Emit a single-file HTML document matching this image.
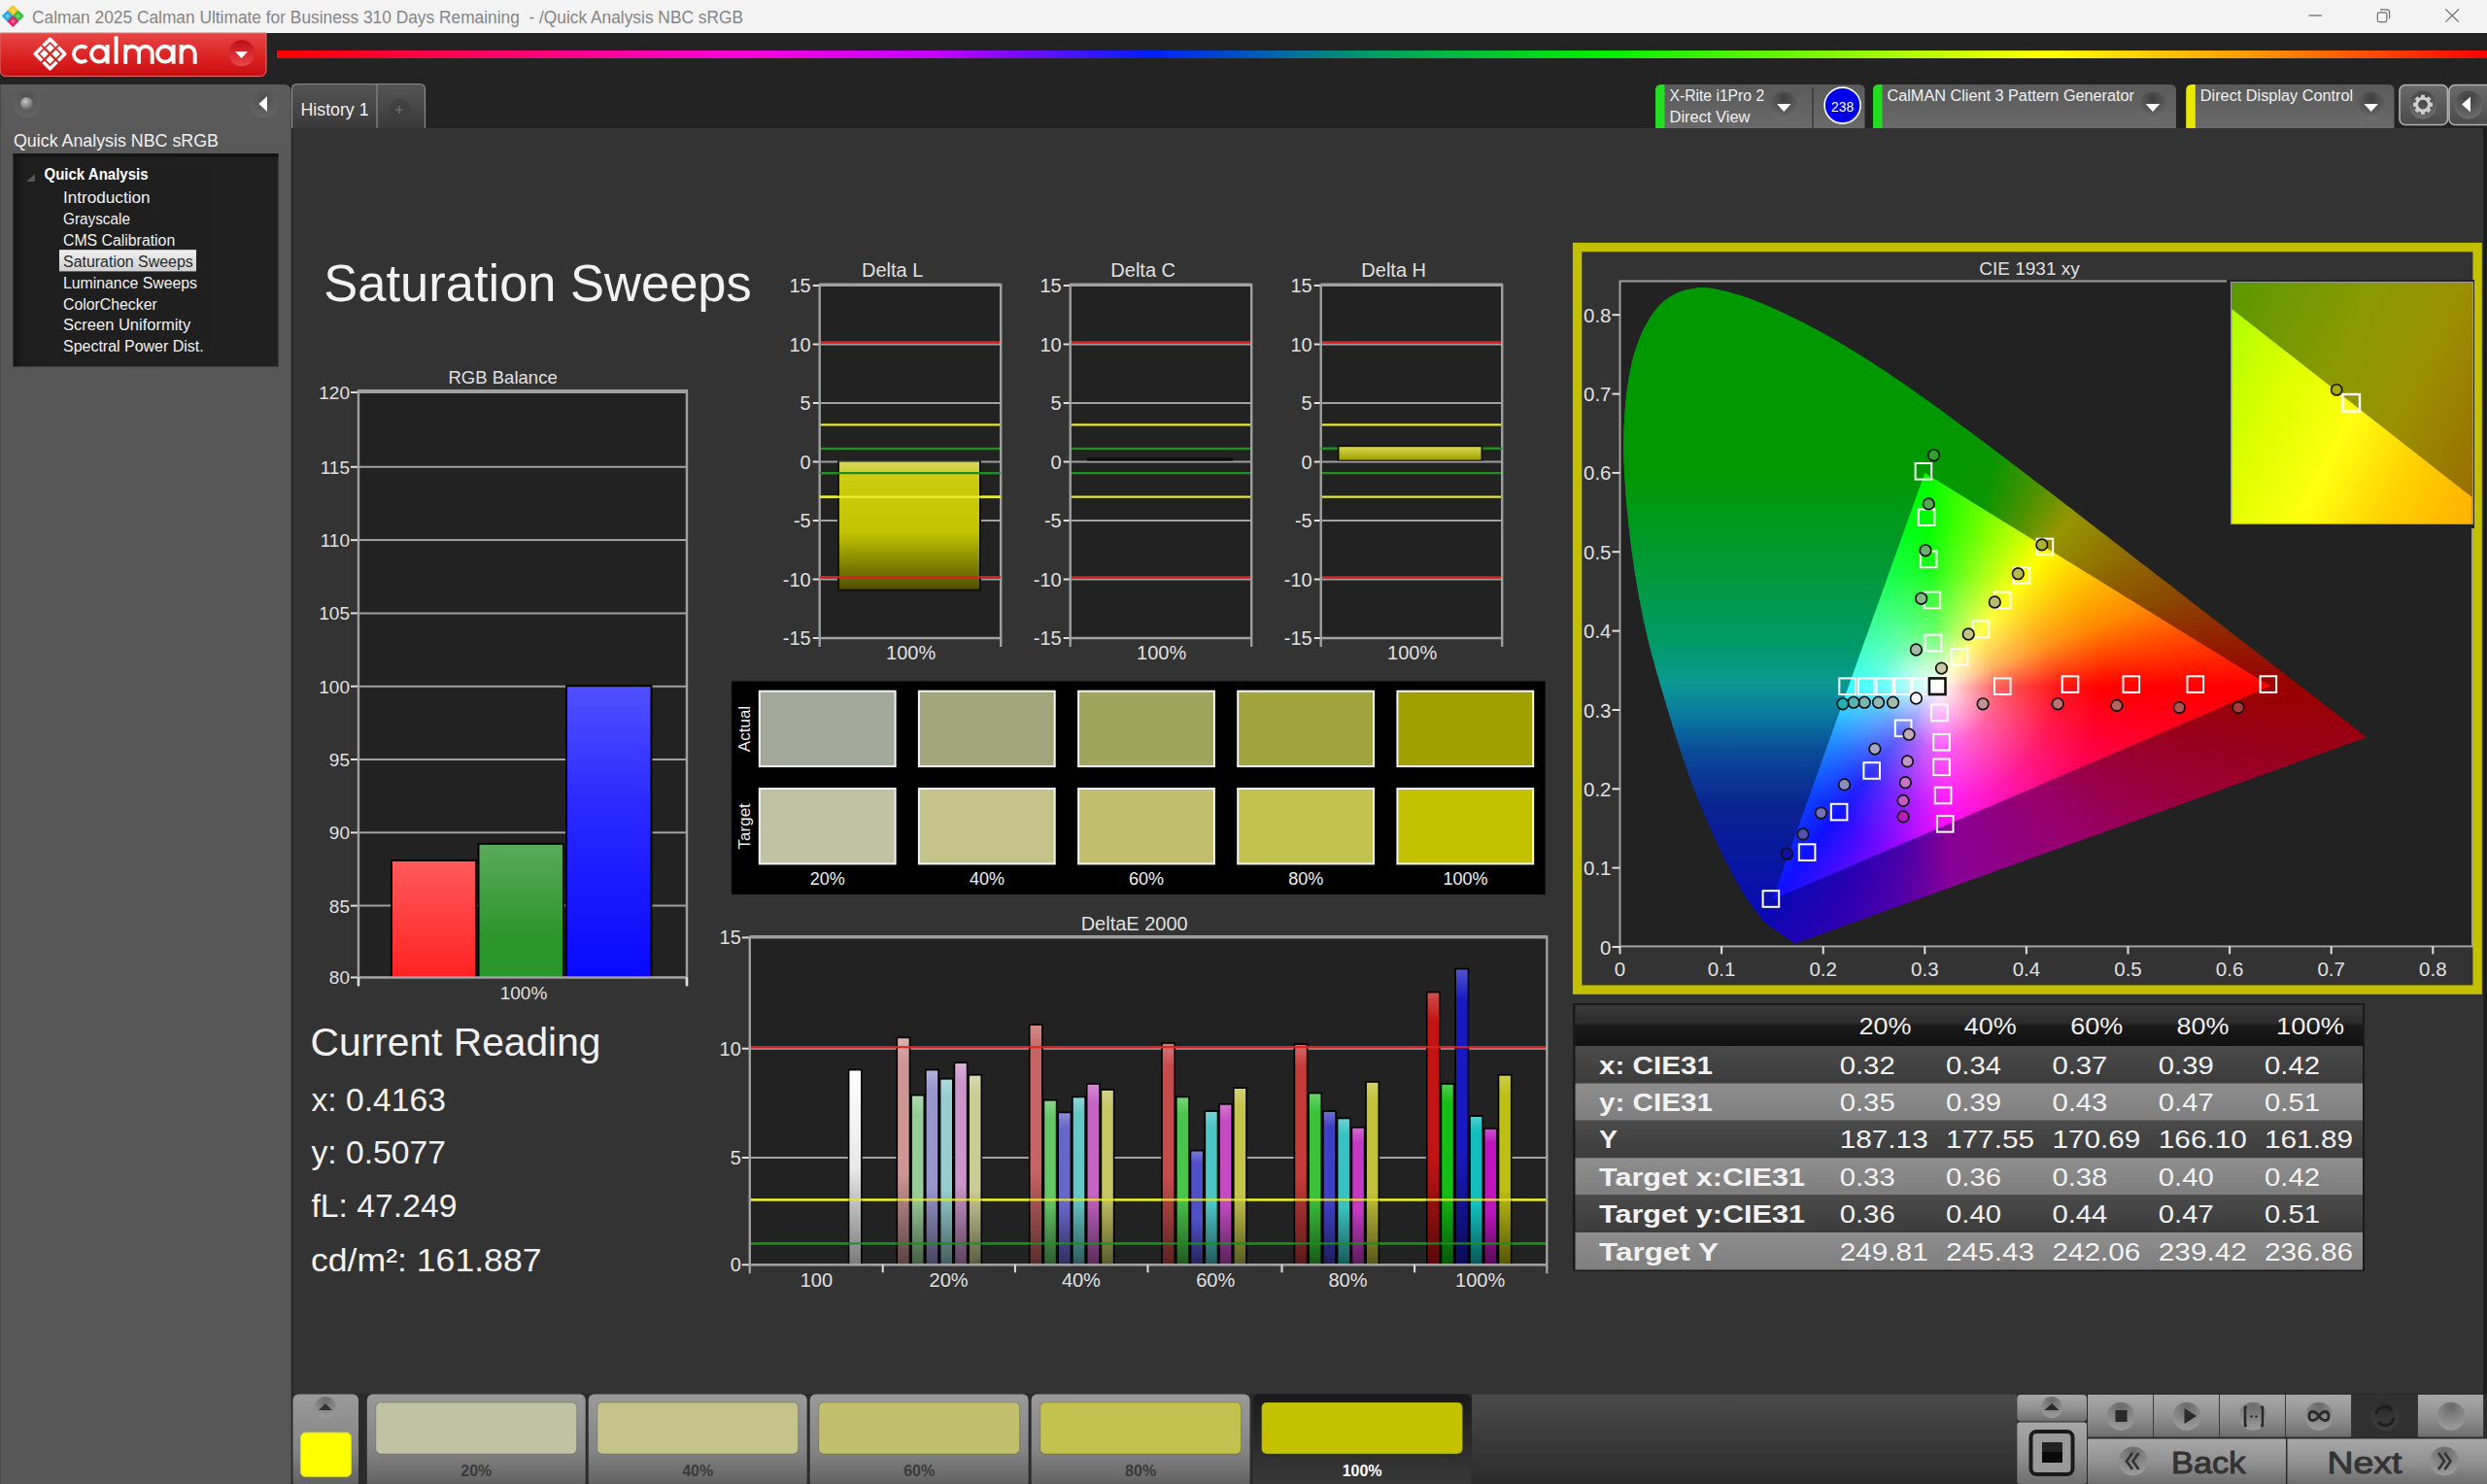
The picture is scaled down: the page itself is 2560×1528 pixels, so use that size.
<!DOCTYPE html>
<html><head><meta charset="utf-8"><style>
html,body{margin:0;padding:0;background:#333;width:2560px;height:1528px;overflow:hidden}
svg{position:absolute;left:0;top:0;font-family:"Liberation Sans", sans-serif}
.abs{position:absolute;left:0;top:0;width:2560px;height:1528px}
</style></head><body>
<svg width="2560" height="1528" viewBox="0 0 2560 1528"><rect x="0" y="0" width="2560" height="34" fill="#f3f3f3"/><path d="M13.3 5.0 L19.3 11.0 L13.3 17.0 L7.300000000000001 11.0 Z" fill="#f5c518"/><path d="M7.8 10.5 L13.8 16.5 L7.8 22.5 L1.7999999999999998 16.5 Z" fill="#29a9e1"/><path d="M18.8 10.5 L24.8 16.5 L18.8 22.5 L12.8 16.5 Z" fill="#33c23b"/><path d="M13.3 16.0 L19.3 22.0 L13.3 28.0 L7.300000000000001 22.0 Z" fill="#e2236b"/><path d="M13.3 8.5 L15.8 11.0 L13.3 13.5 L10.8 11.0 Z" fill="#f3f3f3" opacity="0.35"/><path d="M7.8 14.0 L10.3 16.5 L7.8 19.0 L5.3 16.5 Z" fill="#f3f3f3" opacity="0.35"/><path d="M18.8 14.0 L21.3 16.5 L18.8 19.0 L16.3 16.5 Z" fill="#f3f3f3" opacity="0.35"/><path d="M13.3 19.5 L15.8 22.0 L13.3 24.5 L10.8 22.0 Z" fill="#f3f3f3" opacity="0.35"/><text x="33.0" y="24.0" font-size="17.5" fill="#858585" text-anchor="start" font-weight="normal" textLength="732.0" lengthAdjust="spacingAndGlyphs" >Calman 2025 Calman Ultimate for Business 310 Days Remaining&#160; - /Quick Analysis NBC sRGB</text><line x1="2376.5" y1="16" x2="2390" y2="16" stroke="#6e6e6e" stroke-width="1.3"/><rect x="2447.3" y="12.8" width="9.6" height="9.8" rx="1.8" fill="none" stroke="#6e6e6e" stroke-width="1.2"/><path d="M2450 9.9 H2456.5 Q2459.6 9.9 2459.6 13 V19.3" fill="none" stroke="#6e6e6e" stroke-width="1.2"/><path d="M2517.4 9.5 L2530.9 22.6 M2530.9 9.5 L2517.4 22.6" stroke="#6e6e6e" stroke-width="1.2"/><rect x="0" y="34" width="2560" height="98" fill="#232323"/><defs><linearGradient id="gRed" x1="0" y1="0" x2="0" y2="1"><stop offset="0" stop-color="#e84646"/><stop offset="0.5" stop-color="#dd2626"/><stop offset="1" stop-color="#c90e0e"/></linearGradient><linearGradient id="gRedBtn" x1="0" y1="0" x2="0" y2="1"><stop offset="0" stop-color="#c00c18"/><stop offset="1" stop-color="#e84848"/></linearGradient></defs><path d="M0 34 H274 V72 Q274 78.5 267.5 78.5 H6.5 Q0 78.5 0 72 Z" fill="url(#gRed)" stroke="#e07070" stroke-width="1"/><path d="M51.5 40.2 L66.8 55.5 L51.5 70.8 L36.2 55.5 Z" fill="none" stroke="#fff" stroke-width="3.6" stroke-linejoin="round"/><path d="M51.5 45.6 L55.4 49.5 L51.5 53.4 L47.6 49.5 Z" fill="#fff" stroke="#fff" stroke-width="0.8" stroke-linejoin="round"/><path d="M57.5 51.6 L61.4 55.5 L57.5 59.4 L53.6 55.5 Z" fill="#fff" stroke="#fff" stroke-width="0.8" stroke-linejoin="round"/><path d="M51.5 57.6 L55.4 61.5 L51.5 65.4 L47.6 61.5 Z" fill="#fff" stroke="#fff" stroke-width="0.8" stroke-linejoin="round"/><path d="M45.5 51.6 L49.4 55.5 L45.5 59.4 L41.6 55.5 Z" fill="#fff" stroke="#fff" stroke-width="0.8" stroke-linejoin="round"/><defs><linearGradient id="gRedU" x1="0" y1="34" x2="0" y2="78.5" gradientUnits="userSpaceOnUse"><stop offset="0" stop-color="#e84646"/><stop offset="0.5" stop-color="#dd2626"/><stop offset="1" stop-color="#c90e0e"/></linearGradient></defs><path d="M34.5 38.5 L68.5 72.5 M34.5 72.5 L68.5 38.5" stroke="url(#gRedU)" stroke-width="1.8"/><g fill="none" stroke="#fff" stroke-width="3.9" stroke-linecap="butt"><path d="M89.2 49.6 A8 8 0 1 0 89.2 61.8"/><circle cx="102" cy="55.7" r="7.9"/><path d="M110.6 46 V65.7"/><path d="M119.6 37.3 V65.7"/><path d="M129.2 46 V65.7 M129.2 54.6 A6.875 6.875 0 0 1 142.95 54.6 V65.7 M142.95 54.6 A6.875 6.875 0 0 1 156.7 54.6 V65.7"/><circle cx="169.9" cy="55.7" r="7.9"/><path d="M178.6 46 V65.7"/><path d="M186.6 46 V65.7 M186.6 54.75 A7.05 7.05 0 0 1 200.7 54.75 V65.7"/></g><circle cx="248.8" cy="54.8" r="13.5" fill="url(#gRedBtn)"/><path d="M242 53 L255 53 L248.5 60 Z" fill="#fff"/><defs><linearGradient id="gRain" x1="285" y1="0" x2="2560" y2="0" gradientUnits="userSpaceOnUse"><stop offset="0" stop-color="#ff0000"/><stop offset="0.2" stop-color="#ff00d0"/><stop offset="0.3" stop-color="#c000ff"/><stop offset="0.395" stop-color="#0020ff"/><stop offset="0.5" stop-color="#00a060"/><stop offset="0.6" stop-color="#00ee00"/><stop offset="0.8" stop-color="#ffff00"/><stop offset="0.9" stop-color="#ff9000"/><stop offset="1" stop-color="#ff0000"/></linearGradient></defs><rect x="285" y="52" width="2275" height="8" fill="url(#gRain)"/><defs><linearGradient id="gPanel" x1="0" y1="0" x2="0" y2="1"><stop offset="0" stop-color="#5c5c5c"/><stop offset="0.06" stop-color="#575757"/><stop offset="1" stop-color="#575757"/></linearGradient><radialGradient id="gBtn" cx="0.5" cy="0.3" r="0.7"><stop offset="0" stop-color="#4a4a4a"/><stop offset="1" stop-color="#6a6a6a"/></radialGradient><radialGradient id="gKnob" cx="0.4" cy="0.35" r="0.6"><stop offset="0" stop-color="#c8c8c8"/><stop offset="1" stop-color="#6a6a6a"/></radialGradient></defs><path d="M0 87 H292 Q299.5 87 299.5 94.5 V1528 H0 Z" fill="url(#gPanel)"/><rect x="0" y="87" width="1" height="1441" fill="#4a4a4a"/><circle cx="28" cy="107" r="14" fill="url(#gBtn)" opacity="0.7"/><circle cx="27.5" cy="106.5" r="6.5" fill="url(#gKnob)"/><circle cx="271.5" cy="107" r="14" fill="url(#gBtn)" opacity="0.7"/><path d="M275 99 L266.5 107 L275 115 Z" fill="#fff"/><text x="14.0" y="151.0" font-size="19" fill="#f0f0f0" text-anchor="start" font-weight="normal" textLength="211.0" lengthAdjust="spacingAndGlyphs" >Quick Analysis NBC sRGB</text><defs><linearGradient id="gTree" x1="0" y1="0" x2="1" y2="0"><stop offset="0" stop-color="#141414"/><stop offset="0.04" stop-color="#1e1e1e"/><stop offset="1" stop-color="#202020"/></linearGradient></defs><rect x="13.5" y="158" width="273" height="219.5" fill="url(#gTree)"/><rect x="13.5" y="158" width="273" height="4" fill="#151515"/><path d="M27 187 L36 179 L36 187 Z" fill="#555"/><text x="45.5" y="184.5" font-size="16" fill="#ffffff" text-anchor="start" font-weight="bold" textLength="107.0" lengthAdjust="spacingAndGlyphs" >Quick Analysis</text><defs><linearGradient id="gSel" x1="0" y1="0" x2="0" y2="1"><stop offset="0" stop-color="#f0f0f0"/><stop offset="1" stop-color="#cfcfcf"/></linearGradient></defs><rect x="61" y="257.2" width="141" height="22.2" fill="url(#gSel)"/><text x="65.0" y="209.0" font-size="16" fill="#f2f2f2" text-anchor="start" font-weight="normal" textLength="89.5" lengthAdjust="spacingAndGlyphs" >Introduction</text><text x="65.0" y="230.9" font-size="16" fill="#f2f2f2" text-anchor="start" font-weight="normal" textLength="68.9" lengthAdjust="spacingAndGlyphs" >Grayscale</text><text x="65.0" y="252.8" font-size="16" fill="#f2f2f2" text-anchor="start" font-weight="normal" textLength="115.2" lengthAdjust="spacingAndGlyphs" >CMS Calibration</text><text x="65.0" y="274.7" font-size="16" fill="#2a2a2a" text-anchor="start" font-weight="normal" textLength="133.8" lengthAdjust="spacingAndGlyphs" >Saturation Sweeps</text><text x="65.0" y="296.6" font-size="16" fill="#f2f2f2" text-anchor="start" font-weight="normal" textLength="138.0" lengthAdjust="spacingAndGlyphs" >Luminance Sweeps</text><text x="65.0" y="318.5" font-size="16" fill="#f2f2f2" text-anchor="start" font-weight="normal" textLength="96.7" lengthAdjust="spacingAndGlyphs" >ColorChecker</text><text x="65.0" y="340.4" font-size="16" fill="#f2f2f2" text-anchor="start" font-weight="normal" textLength="131.2" lengthAdjust="spacingAndGlyphs" >Screen Uniformity</text><text x="65.0" y="362.3" font-size="16" fill="#f2f2f2" text-anchor="start" font-weight="normal" textLength="144.7" lengthAdjust="spacingAndGlyphs" >Spectral Power Dist.</text><defs><linearGradient id="gTab" x1="0" y1="0" x2="0" y2="1"><stop offset="0" stop-color="#555"/><stop offset="1" stop-color="#3a3a3a"/></linearGradient></defs><path d="M300.5 132 V92 Q300.5 86.5 306 86.5 H432 Q437.5 86.5 437.5 92 V132" fill="url(#gTab)" stroke="#8a8a8a" stroke-width="1.2"/><line x1="388" y1="87" x2="388" y2="132" stroke="#8a8a8a" stroke-width="1.2"/><text x="309.5" y="118.5" font-size="18" fill="#f0f0f0" text-anchor="start" font-weight="normal" textLength="70.0" lengthAdjust="spacingAndGlyphs" >History 1</text><circle cx="411" cy="113" r="11" fill="#3e3e3e" opacity="0.8"/><path d="M407 113 H415 M411 109 V117" stroke="#777" stroke-width="1.2"/><defs><linearGradient id="gDev" x1="0" y1="0" x2="0" y2="1"><stop offset="0" stop-color="#5a5a5a"/><stop offset="1" stop-color="#6a6a6a"/></linearGradient><radialGradient id="gArr" cx="0.5" cy="0.25" r="0.75"><stop offset="0" stop-color="#3e3e3e"/><stop offset="1" stop-color="#6e6e6e"/></radialGradient></defs><path d="M1704 132 V93 Q1704 87 1710 87 H1913.5 Q1919.5 87 1919.5 93 V132 Z" fill="url(#gDev)"/><path d="M1704 132 V93 Q1704 87 1710 87 H1713.5 V132 Z" fill="#22dd22"/><text x="1718.5" y="103.8" font-size="16" fill="#f0f0f0" text-anchor="start" font-weight="normal" textLength="97.6" lengthAdjust="spacingAndGlyphs" >X-Rite i1Pro 2</text><text x="1718.5" y="125.7" font-size="16" fill="#f0f0f0" text-anchor="start" font-weight="normal" textLength="83.0" lengthAdjust="spacingAndGlyphs" >Direct View</text><circle cx="1836.3" cy="109" r="14.5" fill="url(#gArr)"/><path d="M1829.0 107 H1843.6 L1836.3 115 Z" fill="#fff"/><line x1="1866" y1="90" x2="1866" y2="132" stroke="#3a3a3a" stroke-width="1.5"/><circle cx="1896.6" cy="108.6" r="18.5" fill="#0000e8" stroke="#fff" stroke-width="1.6"/><text x="1896.6" y="114.5" font-size="15" fill="#fff" text-anchor="middle" font-weight="normal" textLength="23.0" lengthAdjust="spacingAndGlyphs" >238</text><path d="M1928 132 V93 Q1928 87 1934 87 H2234 Q2240 87 2240 93 V132 Z" fill="url(#gDev)"/><path d="M1928 132 V93 Q1928 87 1934 87 H1937.5 V132 Z" fill="#22dd22"/><text x="1942.5" y="103.8" font-size="16" fill="#f0f0f0" text-anchor="start" font-weight="normal" textLength="254.5" lengthAdjust="spacingAndGlyphs" >CalMAN Client 3 Pattern Generator</text><circle cx="2216" cy="109" r="14.5" fill="url(#gArr)"/><path d="M2208.7 107 H2223.3 L2216 115 Z" fill="#fff"/><path d="M2250.3 132 V93 Q2250.3 87 2256.3 87 H2458.5 Q2464.5 87 2464.5 93 V132 Z" fill="url(#gDev)"/><path d="M2250.3 132 V93 Q2250.3 87 2256.3 87 H2259.8 V132 Z" fill="#e8e800"/><text x="2264.8" y="103.8" font-size="16" fill="#f0f0f0" text-anchor="start" font-weight="normal" textLength="157.4" lengthAdjust="spacingAndGlyphs" >Direct Display Control</text><circle cx="2440.7" cy="109" r="14.5" fill="url(#gArr)"/><path d="M2433.3999999999996 107 H2448.0 L2440.7 115 Z" fill="#fff"/><defs><linearGradient id="gBtnSq" x1="0" y1="0" x2="0" y2="1"><stop offset="0" stop-color="#6a6a6a"/><stop offset="1" stop-color="#4a4a4a"/></linearGradient></defs><rect x="2470" y="87.5" width="49.5" height="41" rx="6" fill="url(#gBtnSq)" stroke="#b0b0b0" stroke-width="1.6"/><circle cx="2494" cy="108" r="14.5" fill="url(#gArr)"/><rect x="2492.0" y="97.7" width="4" height="5" fill="#cfcfcf" transform="rotate(0 2494 107.7)"/><rect x="2492.0" y="97.7" width="4" height="5" fill="#cfcfcf" transform="rotate(45 2494 107.7)"/><rect x="2492.0" y="97.7" width="4" height="5" fill="#cfcfcf" transform="rotate(90 2494 107.7)"/><rect x="2492.0" y="97.7" width="4" height="5" fill="#cfcfcf" transform="rotate(135 2494 107.7)"/><rect x="2492.0" y="97.7" width="4" height="5" fill="#cfcfcf" transform="rotate(180 2494 107.7)"/><rect x="2492.0" y="97.7" width="4" height="5" fill="#cfcfcf" transform="rotate(225 2494 107.7)"/><rect x="2492.0" y="97.7" width="4" height="5" fill="#cfcfcf" transform="rotate(270 2494 107.7)"/><rect x="2492.0" y="97.7" width="4" height="5" fill="#cfcfcf" transform="rotate(315 2494 107.7)"/><circle cx="2494" cy="107.7" r="6.5" fill="none" stroke="#cfcfcf" stroke-width="3"/><rect x="2521" y="87.5" width="45" height="41" rx="6" fill="url(#gBtnSq)" stroke="#b0b0b0" stroke-width="1.6"/><circle cx="2541" cy="108" r="14.5" fill="url(#gArr)"/><path d="M2543 99.5 L2534 107.5 L2543 115.5 Z" fill="#fff"/><rect x="300" y="132" width="2260" height="1303" fill="#333333"/><rect x="300" y="132" width="2" height="1396" fill="#2a2a2a"/><rect x="2556" y="132" width="4" height="1303" fill="#1c1c1c"/><text x="333.3" y="310.4" font-size="53" fill="#f2f2f2" text-anchor="start" font-weight="normal" textLength="440.5" lengthAdjust="spacingAndGlyphs" >Saturation Sweeps</text><rect x="369" y="404" width="338" height="602.4" fill="#222222"/><text x="517.6" y="395.4" font-size="19" fill="#e0e0e0" text-anchor="middle" font-weight="normal" textLength="112.2" lengthAdjust="spacingAndGlyphs" >RGB Balance</text><line x1="369" y1="1006.4" x2="707" y2="1006.4" stroke="#a0a0a0" stroke-width="2"/><line x1="361" y1="1006.4" x2="369" y2="1006.4" stroke="#e0e0e0" stroke-width="2"/><text x="360.0" y="1013.4" font-size="19" fill="#e0e0e0" text-anchor="end" font-weight="normal" >80</text><line x1="369" y1="932.6" x2="707" y2="932.6" stroke="#a0a0a0" stroke-width="2"/><line x1="361" y1="932.6" x2="369" y2="932.6" stroke="#e0e0e0" stroke-width="2"/><text x="360.0" y="939.6" font-size="19" fill="#e0e0e0" text-anchor="end" font-weight="normal" >85</text><line x1="369" y1="857.3" x2="707" y2="857.3" stroke="#a0a0a0" stroke-width="2"/><line x1="361" y1="857.3" x2="369" y2="857.3" stroke="#e0e0e0" stroke-width="2"/><text x="360.0" y="864.3" font-size="19" fill="#e0e0e0" text-anchor="end" font-weight="normal" >90</text><line x1="369" y1="782.0" x2="707" y2="782.0" stroke="#a0a0a0" stroke-width="2"/><line x1="361" y1="782.0" x2="369" y2="782.0" stroke="#e0e0e0" stroke-width="2"/><text x="360.0" y="789.0" font-size="19" fill="#e0e0e0" text-anchor="end" font-weight="normal" >95</text><line x1="369" y1="706.7" x2="707" y2="706.7" stroke="#a0a0a0" stroke-width="2"/><line x1="361" y1="706.7" x2="369" y2="706.7" stroke="#e0e0e0" stroke-width="2"/><text x="360.0" y="713.7" font-size="19" fill="#e0e0e0" text-anchor="end" font-weight="normal" >100</text><line x1="369" y1="631.4" x2="707" y2="631.4" stroke="#a0a0a0" stroke-width="2"/><line x1="361" y1="631.4" x2="369" y2="631.4" stroke="#e0e0e0" stroke-width="2"/><text x="360.0" y="638.4" font-size="19" fill="#e0e0e0" text-anchor="end" font-weight="normal" >105</text><line x1="369" y1="556.1" x2="707" y2="556.1" stroke="#a0a0a0" stroke-width="2"/><line x1="361" y1="556.1" x2="369" y2="556.1" stroke="#e0e0e0" stroke-width="2"/><text x="360.0" y="563.1" font-size="19" fill="#e0e0e0" text-anchor="end" font-weight="normal" >110</text><line x1="369" y1="480.8" x2="707" y2="480.8" stroke="#a0a0a0" stroke-width="2"/><line x1="361" y1="480.8" x2="369" y2="480.8" stroke="#e0e0e0" stroke-width="2"/><text x="360.0" y="487.8" font-size="19" fill="#e0e0e0" text-anchor="end" font-weight="normal" >115</text><line x1="369" y1="404.0" x2="707" y2="404.0" stroke="#a0a0a0" stroke-width="2"/><line x1="361" y1="404.0" x2="369" y2="404.0" stroke="#e0e0e0" stroke-width="2"/><text x="360.0" y="411.0" font-size="19" fill="#e0e0e0" text-anchor="end" font-weight="normal" >120</text><line x1="369" y1="402.5" x2="707" y2="402.5" stroke="#a0a0a0" stroke-width="3"/><defs><linearGradient id="gR" x1="0" y1="0" x2="0" y2="1"><stop offset="0" stop-color="#ff5a5a"/><stop offset="1" stop-color="#ff2222"/></linearGradient><linearGradient id="gG" x1="0" y1="0" x2="0" y2="1"><stop offset="0" stop-color="#5aaa5a"/><stop offset="0.7" stop-color="#2b962b"/><stop offset="1" stop-color="#2a952a"/></linearGradient><linearGradient id="gB" x1="0" y1="0" x2="0" y2="1"><stop offset="0" stop-color="#5050ff"/><stop offset="0.4" stop-color="#2a2aff"/><stop offset="1" stop-color="#0808ff"/></linearGradient></defs><rect x="402" y="884.9" width="89" height="121.5" fill="#000"/><rect x="404" y="886.9" width="85" height="119.5" fill="url(#gR)"/><rect x="491.5" y="867.8" width="89.5" height="138.6" fill="#000"/><rect x="493.5" y="869.8" width="85.5" height="136.6" fill="url(#gG)"/><rect x="582" y="705.2" width="89.5" height="301.2" fill="#000"/><rect x="584" y="707.2" width="85.5" height="299.2" fill="url(#gB)"/><line x1="369" y1="401" x2="369" y2="1014.4" stroke="#a0a0a0" stroke-width="2.4"/><line x1="707" y1="401" x2="707" y2="1014.4" stroke="#a0a0a0" stroke-width="2.4"/><line x1="369" y1="1006.4" x2="707" y2="1006.4" stroke="#a0a0a0" stroke-width="2.4"/><line x1="369" y1="1006.4" x2="369" y2="1015.4" stroke="#e0e0e0" stroke-width="2.4"/><line x1="707" y1="1006.4" x2="707" y2="1015.4" stroke="#e0e0e0" stroke-width="2.4"/><text x="539.0" y="1029.0" font-size="19" fill="#e0e0e0" text-anchor="middle" font-weight="normal" >100%</text><defs><linearGradient id="gDL" x1="0" y1="0" x2="0" y2="1"><stop offset="0" stop-color="#d8d860"/><stop offset="0.12" stop-color="#cccc10"/><stop offset="0.55" stop-color="#c4c400"/><stop offset="1" stop-color="#505000"/></linearGradient><linearGradient id="gDH" x1="0" y1="0" x2="0" y2="1"><stop offset="0" stop-color="#d8d850"/><stop offset="1" stop-color="#a0a000"/></linearGradient></defs><rect x="843.7" y="294.0" width="186.5" height="363.0" fill="#222222"/><text x="918.7" y="285.4" font-size="20" fill="#e0e0e0" text-anchor="middle" font-weight="normal" >Delta L</text><line x1="843.7" y1="657.0" x2="1030.2" y2="657.0" stroke="#a0a0a0" stroke-width="2"/><line x1="836.7" y1="657.0" x2="843.7" y2="657.0" stroke="#e0e0e0" stroke-width="2"/><text x="834.7" y="664.0" font-size="20" fill="#e0e0e0" text-anchor="end" font-weight="normal" >-15</text><line x1="843.7" y1="596.5" x2="1030.2" y2="596.5" stroke="#a0a0a0" stroke-width="2"/><line x1="836.7" y1="596.5" x2="843.7" y2="596.5" stroke="#e0e0e0" stroke-width="2"/><text x="834.7" y="603.5" font-size="20" fill="#e0e0e0" text-anchor="end" font-weight="normal" >-10</text><line x1="843.7" y1="536.0" x2="1030.2" y2="536.0" stroke="#a0a0a0" stroke-width="2"/><line x1="836.7" y1="536.0" x2="843.7" y2="536.0" stroke="#e0e0e0" stroke-width="2"/><text x="834.7" y="543.0" font-size="20" fill="#e0e0e0" text-anchor="end" font-weight="normal" >-5</text><line x1="843.7" y1="475.5" x2="1030.2" y2="475.5" stroke="#a0a0a0" stroke-width="2"/><line x1="836.7" y1="475.5" x2="843.7" y2="475.5" stroke="#e0e0e0" stroke-width="2"/><text x="834.7" y="482.5" font-size="20" fill="#e0e0e0" text-anchor="end" font-weight="normal" >0</text><line x1="843.7" y1="415.0" x2="1030.2" y2="415.0" stroke="#a0a0a0" stroke-width="2"/><line x1="836.7" y1="415.0" x2="843.7" y2="415.0" stroke="#e0e0e0" stroke-width="2"/><text x="834.7" y="422.0" font-size="20" fill="#e0e0e0" text-anchor="end" font-weight="normal" >5</text><line x1="843.7" y1="354.5" x2="1030.2" y2="354.5" stroke="#a0a0a0" stroke-width="2"/><line x1="836.7" y1="354.5" x2="843.7" y2="354.5" stroke="#e0e0e0" stroke-width="2"/><text x="834.7" y="361.5" font-size="20" fill="#e0e0e0" text-anchor="end" font-weight="normal" >10</text><line x1="843.7" y1="294.0" x2="1030.2" y2="294.0" stroke="#a0a0a0" stroke-width="2"/><line x1="836.7" y1="294.0" x2="843.7" y2="294.0" stroke="#e0e0e0" stroke-width="2"/><text x="834.7" y="301.0" font-size="20" fill="#e0e0e0" text-anchor="end" font-weight="normal" >15</text><line x1="843.7" y1="293.0" x2="1030.2" y2="293.0" stroke="#a0a0a0" stroke-width="3"/><line x1="843.7" y1="352.3" x2="1030.2" y2="352.3" stroke="#e02020" stroke-width="2.2"/><line x1="843.7" y1="594.3" x2="1030.2" y2="594.3" stroke="#e02020" stroke-width="2.2"/><line x1="843.7" y1="437.4" x2="1030.2" y2="437.4" stroke="#e8e830" stroke-width="2.2"/><line x1="843.7" y1="511.6" x2="1030.2" y2="511.6" stroke="#e8e830" stroke-width="2.2"/><line x1="843.7" y1="461.8" x2="1030.2" y2="461.8" stroke="#1f8f1f" stroke-width="2.2"/><line x1="843.7" y1="487.2" x2="1030.2" y2="487.2" stroke="#1f8f1f" stroke-width="2.2"/><line x1="843.7" y1="292.0" x2="843.7" y2="666" stroke="#a0a0a0" stroke-width="2.4"/><line x1="1030.2" y1="292.0" x2="1030.2" y2="666" stroke="#a0a0a0" stroke-width="2.4"/><line x1="843.7" y1="657" x2="1030.2" y2="657" stroke="#a0a0a0" stroke-width="2.4"/><text x="937.7" y="679.4" font-size="20" fill="#e0e0e0" text-anchor="middle" font-weight="normal" >100%</text><rect x="862" y="474.5" width="148" height="134.1" fill="#111"/><rect x="864" y="475.5" width="144" height="131.1" fill="url(#gDL)"/><line x1="843.7" y1="594.3" x2="1030.2" y2="594.3" stroke="#e02020" stroke-width="2.2"/><line x1="843.7" y1="511.6" x2="1030.2" y2="511.6" stroke="#f0f030" stroke-width="2.2"/><line x1="843.7" y1="487.2" x2="1030.2" y2="487.2" stroke="#1f8f1f" stroke-width="2.2"/><rect x="1101.7" y="294.0" width="186.5" height="363.0" fill="#222222"/><text x="1176.7" y="285.4" font-size="20" fill="#e0e0e0" text-anchor="middle" font-weight="normal" >Delta C</text><line x1="1101.7" y1="657.0" x2="1288.2" y2="657.0" stroke="#a0a0a0" stroke-width="2"/><line x1="1094.7" y1="657.0" x2="1101.7" y2="657.0" stroke="#e0e0e0" stroke-width="2"/><text x="1092.7" y="664.0" font-size="20" fill="#e0e0e0" text-anchor="end" font-weight="normal" >-15</text><line x1="1101.7" y1="596.5" x2="1288.2" y2="596.5" stroke="#a0a0a0" stroke-width="2"/><line x1="1094.7" y1="596.5" x2="1101.7" y2="596.5" stroke="#e0e0e0" stroke-width="2"/><text x="1092.7" y="603.5" font-size="20" fill="#e0e0e0" text-anchor="end" font-weight="normal" >-10</text><line x1="1101.7" y1="536.0" x2="1288.2" y2="536.0" stroke="#a0a0a0" stroke-width="2"/><line x1="1094.7" y1="536.0" x2="1101.7" y2="536.0" stroke="#e0e0e0" stroke-width="2"/><text x="1092.7" y="543.0" font-size="20" fill="#e0e0e0" text-anchor="end" font-weight="normal" >-5</text><line x1="1101.7" y1="475.5" x2="1288.2" y2="475.5" stroke="#a0a0a0" stroke-width="2"/><line x1="1094.7" y1="475.5" x2="1101.7" y2="475.5" stroke="#e0e0e0" stroke-width="2"/><text x="1092.7" y="482.5" font-size="20" fill="#e0e0e0" text-anchor="end" font-weight="normal" >0</text><line x1="1101.7" y1="415.0" x2="1288.2" y2="415.0" stroke="#a0a0a0" stroke-width="2"/><line x1="1094.7" y1="415.0" x2="1101.7" y2="415.0" stroke="#e0e0e0" stroke-width="2"/><text x="1092.7" y="422.0" font-size="20" fill="#e0e0e0" text-anchor="end" font-weight="normal" >5</text><line x1="1101.7" y1="354.5" x2="1288.2" y2="354.5" stroke="#a0a0a0" stroke-width="2"/><line x1="1094.7" y1="354.5" x2="1101.7" y2="354.5" stroke="#e0e0e0" stroke-width="2"/><text x="1092.7" y="361.5" font-size="20" fill="#e0e0e0" text-anchor="end" font-weight="normal" >10</text><line x1="1101.7" y1="294.0" x2="1288.2" y2="294.0" stroke="#a0a0a0" stroke-width="2"/><line x1="1094.7" y1="294.0" x2="1101.7" y2="294.0" stroke="#e0e0e0" stroke-width="2"/><text x="1092.7" y="301.0" font-size="20" fill="#e0e0e0" text-anchor="end" font-weight="normal" >15</text><line x1="1101.7" y1="293.0" x2="1288.2" y2="293.0" stroke="#a0a0a0" stroke-width="3"/><line x1="1101.7" y1="352.3" x2="1288.2" y2="352.3" stroke="#e02020" stroke-width="2.2"/><line x1="1101.7" y1="594.3" x2="1288.2" y2="594.3" stroke="#e02020" stroke-width="2.2"/><line x1="1101.7" y1="437.4" x2="1288.2" y2="437.4" stroke="#e8e830" stroke-width="2.2"/><line x1="1101.7" y1="511.6" x2="1288.2" y2="511.6" stroke="#e8e830" stroke-width="2.2"/><line x1="1101.7" y1="461.8" x2="1288.2" y2="461.8" stroke="#1f8f1f" stroke-width="2.2"/><line x1="1101.7" y1="487.2" x2="1288.2" y2="487.2" stroke="#1f8f1f" stroke-width="2.2"/><line x1="1101.7" y1="292.0" x2="1101.7" y2="666" stroke="#a0a0a0" stroke-width="2.4"/><line x1="1288.2" y1="292.0" x2="1288.2" y2="666" stroke="#a0a0a0" stroke-width="2.4"/><line x1="1101.7" y1="657" x2="1288.2" y2="657" stroke="#a0a0a0" stroke-width="2.4"/><text x="1195.7" y="679.4" font-size="20" fill="#e0e0e0" text-anchor="middle" font-weight="normal" >100%</text><rect x="1119" y="471.5" width="150" height="3" fill="#0a0a0a"/><rect x="1359.7" y="294.0" width="186.5" height="363.0" fill="#222222"/><text x="1434.7" y="285.4" font-size="20" fill="#e0e0e0" text-anchor="middle" font-weight="normal" >Delta H</text><line x1="1359.7" y1="657.0" x2="1546.2" y2="657.0" stroke="#a0a0a0" stroke-width="2"/><line x1="1352.7" y1="657.0" x2="1359.7" y2="657.0" stroke="#e0e0e0" stroke-width="2"/><text x="1350.7" y="664.0" font-size="20" fill="#e0e0e0" text-anchor="end" font-weight="normal" >-15</text><line x1="1359.7" y1="596.5" x2="1546.2" y2="596.5" stroke="#a0a0a0" stroke-width="2"/><line x1="1352.7" y1="596.5" x2="1359.7" y2="596.5" stroke="#e0e0e0" stroke-width="2"/><text x="1350.7" y="603.5" font-size="20" fill="#e0e0e0" text-anchor="end" font-weight="normal" >-10</text><line x1="1359.7" y1="536.0" x2="1546.2" y2="536.0" stroke="#a0a0a0" stroke-width="2"/><line x1="1352.7" y1="536.0" x2="1359.7" y2="536.0" stroke="#e0e0e0" stroke-width="2"/><text x="1350.7" y="543.0" font-size="20" fill="#e0e0e0" text-anchor="end" font-weight="normal" >-5</text><line x1="1359.7" y1="475.5" x2="1546.2" y2="475.5" stroke="#a0a0a0" stroke-width="2"/><line x1="1352.7" y1="475.5" x2="1359.7" y2="475.5" stroke="#e0e0e0" stroke-width="2"/><text x="1350.7" y="482.5" font-size="20" fill="#e0e0e0" text-anchor="end" font-weight="normal" >0</text><line x1="1359.7" y1="415.0" x2="1546.2" y2="415.0" stroke="#a0a0a0" stroke-width="2"/><line x1="1352.7" y1="415.0" x2="1359.7" y2="415.0" stroke="#e0e0e0" stroke-width="2"/><text x="1350.7" y="422.0" font-size="20" fill="#e0e0e0" text-anchor="end" font-weight="normal" >5</text><line x1="1359.7" y1="354.5" x2="1546.2" y2="354.5" stroke="#a0a0a0" stroke-width="2"/><line x1="1352.7" y1="354.5" x2="1359.7" y2="354.5" stroke="#e0e0e0" stroke-width="2"/><text x="1350.7" y="361.5" font-size="20" fill="#e0e0e0" text-anchor="end" font-weight="normal" >10</text><line x1="1359.7" y1="294.0" x2="1546.2" y2="294.0" stroke="#a0a0a0" stroke-width="2"/><line x1="1352.7" y1="294.0" x2="1359.7" y2="294.0" stroke="#e0e0e0" stroke-width="2"/><text x="1350.7" y="301.0" font-size="20" fill="#e0e0e0" text-anchor="end" font-weight="normal" >15</text><line x1="1359.7" y1="293.0" x2="1546.2" y2="293.0" stroke="#a0a0a0" stroke-width="3"/><line x1="1359.7" y1="352.3" x2="1546.2" y2="352.3" stroke="#e02020" stroke-width="2.2"/><line x1="1359.7" y1="594.3" x2="1546.2" y2="594.3" stroke="#e02020" stroke-width="2.2"/><line x1="1359.7" y1="437.4" x2="1546.2" y2="437.4" stroke="#e8e830" stroke-width="2.2"/><line x1="1359.7" y1="511.6" x2="1546.2" y2="511.6" stroke="#e8e830" stroke-width="2.2"/><line x1="1359.7" y1="461.8" x2="1546.2" y2="461.8" stroke="#1f8f1f" stroke-width="2.2"/><line x1="1359.7" y1="487.2" x2="1546.2" y2="487.2" stroke="#1f8f1f" stroke-width="2.2"/><line x1="1359.7" y1="292.0" x2="1359.7" y2="666" stroke="#a0a0a0" stroke-width="2.4"/><line x1="1546.2" y1="292.0" x2="1546.2" y2="666" stroke="#a0a0a0" stroke-width="2.4"/><line x1="1359.7" y1="657" x2="1546.2" y2="657" stroke="#a0a0a0" stroke-width="2.4"/><text x="1453.7" y="679.4" font-size="20" fill="#e0e0e0" text-anchor="middle" font-weight="normal" >100%</text><rect x="1376.5" y="458.2" width="150" height="16.3" fill="#111"/><rect x="1378.5" y="460.2" width="146" height="13.3" fill="url(#gDH)"/><line x1="1359.7" y1="461.8" x2="1376.5" y2="461.8" stroke="#1f8f1f" stroke-width="2.4"/><line x1="1526.5" y1="461.8" x2="1546.2" y2="461.8" stroke="#1f8f1f" stroke-width="2.4"/><rect x="753" y="701.4" width="837.6" height="219.6" fill="#000"/><rect x="781.8" y="711.7" width="139.8" height="77.4" fill="#a3a898" stroke="#f4f4f4" stroke-width="2"/><rect x="781.8" y="812" width="139.8" height="77.4" fill="#c1c2a3" stroke="#f4f4f4" stroke-width="2"/><text x="851.8" y="911.3" font-size="18" fill="#f0f0f0" text-anchor="middle" font-weight="normal" >20%</text><rect x="945.9" y="711.7" width="139.8" height="77.4" fill="#a2a77b" stroke="#f4f4f4" stroke-width="2"/><rect x="945.9" y="812" width="139.8" height="77.4" fill="#c4c38a" stroke="#f4f4f4" stroke-width="2"/><text x="1015.9" y="911.3" font-size="18" fill="#f0f0f0" text-anchor="middle" font-weight="normal" >40%</text><rect x="1110.1" y="711.7" width="139.8" height="77.4" fill="#9fa55d" stroke="#f4f4f4" stroke-width="2"/><rect x="1110.1" y="812" width="139.8" height="77.4" fill="#c1bf6b" stroke="#f4f4f4" stroke-width="2"/><text x="1180.1" y="911.3" font-size="18" fill="#f0f0f0" text-anchor="middle" font-weight="normal" >60%</text><rect x="1274.2" y="711.7" width="139.8" height="77.4" fill="#a0a43e" stroke="#f4f4f4" stroke-width="2"/><rect x="1274.2" y="812" width="139.8" height="77.4" fill="#c2c24e" stroke="#f4f4f4" stroke-width="2"/><text x="1344.2" y="911.3" font-size="18" fill="#f0f0f0" text-anchor="middle" font-weight="normal" >80%</text><rect x="1438.4" y="711.7" width="139.8" height="77.4" fill="#a0a000" stroke="#f4f4f4" stroke-width="2"/><rect x="1438.4" y="812" width="139.8" height="77.4" fill="#c4c200" stroke="#f4f4f4" stroke-width="2"/><text x="1508.4" y="911.3" font-size="18" fill="#f0f0f0" text-anchor="middle" font-weight="normal" >100%</text><text transform="translate(771.5 750.5) rotate(-90)" font-size="17" fill="#f0f0f0" text-anchor="middle">Actual</text><text transform="translate(771.5 850.8) rotate(-90)" font-size="17" fill="#f0f0f0" text-anchor="middle">Target</text><rect x="771.8" y="965.4" width="820.5" height="336.9" fill="#222222"/><text x="1167.7" y="958.3" font-size="20" fill="#e0e0e0" text-anchor="middle" font-weight="normal" >DeltaE 2000</text><line x1="771.8" y1="1302.3" x2="1592.3" y2="1302.3" stroke="#a0a0a0" stroke-width="2"/><line x1="763.8" y1="1302.3" x2="771.8" y2="1302.3" stroke="#e0e0e0" stroke-width="2"/><text x="762.8" y="1309.3" font-size="20" fill="#e0e0e0" text-anchor="end" font-weight="normal" >0</text><line x1="771.8" y1="1192.0" x2="1592.3" y2="1192.0" stroke="#a0a0a0" stroke-width="2"/><line x1="763.8" y1="1192.0" x2="771.8" y2="1192.0" stroke="#e0e0e0" stroke-width="2"/><text x="762.8" y="1199.0" font-size="20" fill="#e0e0e0" text-anchor="end" font-weight="normal" >5</text><line x1="771.8" y1="1079.7" x2="1592.3" y2="1079.7" stroke="#a0a0a0" stroke-width="2"/><line x1="763.8" y1="1079.7" x2="771.8" y2="1079.7" stroke="#e0e0e0" stroke-width="2"/><text x="762.8" y="1086.7" font-size="20" fill="#e0e0e0" text-anchor="end" font-weight="normal" >10</text><line x1="771.8" y1="965.4" x2="1592.3" y2="965.4" stroke="#a0a0a0" stroke-width="2"/><line x1="763.8" y1="965.4" x2="771.8" y2="965.4" stroke="#e0e0e0" stroke-width="2"/><text x="762.8" y="972.4" font-size="20" fill="#e0e0e0" text-anchor="end" font-weight="normal" >15</text><line x1="771.8" y1="964.4" x2="1592.3" y2="964.4" stroke="#a0a0a0" stroke-width="3"/><line x1="771.8" y1="1078.2" x2="1592.3" y2="1078.2" stroke="#e02020" stroke-width="2.2"/><line x1="771.8" y1="1235.4" x2="1592.3" y2="1235.4" stroke="#e8e830" stroke-width="2.2"/><line x1="771.8" y1="1280.3" x2="1592.3" y2="1280.3" stroke="#1f8f1f" stroke-width="2.2"/><defs><linearGradient id="bw" x1="0" y1="0" x2="0" y2="1"><stop offset="0" stop-color="#ffffff"/><stop offset="0.5" stop-color="#e8e8e8"/><stop offset="1" stop-color="#7a7a7a"/></linearGradient><linearGradient id="b00" x1="0" y1="0" x2="0" y2="1"><stop offset="0" stop-color="#dab0b0"/><stop offset="0.1" stop-color="#cd9595"/><stop offset="0.6" stop-color="#cd9595"/><stop offset="1" stop-color="#5c4343"/></linearGradient><linearGradient id="b01" x1="0" y1="0" x2="0" y2="1"><stop offset="0" stop-color="#b0d9b0"/><stop offset="0.1" stop-color="#95cc95"/><stop offset="0.6" stop-color="#95cc95"/><stop offset="1" stop-color="#435c43"/></linearGradient><linearGradient id="b02" x1="0" y1="0" x2="0" y2="1"><stop offset="0" stop-color="#b1b1da"/><stop offset="0.1" stop-color="#9797cd"/><stop offset="0.6" stop-color="#9797cd"/><stop offset="1" stop-color="#44445c"/></linearGradient><linearGradient id="b03" x1="0" y1="0" x2="0" y2="1"><stop offset="0" stop-color="#b0d9d9"/><stop offset="0.1" stop-color="#95cccc"/><stop offset="0.6" stop-color="#95cccc"/><stop offset="1" stop-color="#435c5c"/></linearGradient><linearGradient id="b04" x1="0" y1="0" x2="0" y2="1"><stop offset="0" stop-color="#d9b0d9"/><stop offset="0.1" stop-color="#cc95cc"/><stop offset="0.6" stop-color="#cc95cc"/><stop offset="1" stop-color="#5c435c"/></linearGradient><linearGradient id="b05" x1="0" y1="0" x2="0" y2="1"><stop offset="0" stop-color="#d9d9b0"/><stop offset="0.1" stop-color="#cccc95"/><stop offset="0.6" stop-color="#cccc95"/><stop offset="1" stop-color="#5c5c43"/></linearGradient><linearGradient id="b10" x1="0" y1="0" x2="0" y2="1"><stop offset="0" stop-color="#d68b8b"/><stop offset="0.1" stop-color="#c96464"/><stop offset="0.6" stop-color="#c96464"/><stop offset="1" stop-color="#5a2d2d"/></linearGradient><linearGradient id="b11" x1="0" y1="0" x2="0" y2="1"><stop offset="0" stop-color="#8bd48b"/><stop offset="0.1" stop-color="#64c664"/><stop offset="0.6" stop-color="#64c664"/><stop offset="1" stop-color="#2d592d"/></linearGradient><linearGradient id="b12" x1="0" y1="0" x2="0" y2="1"><stop offset="0" stop-color="#8d8dd6"/><stop offset="0.1" stop-color="#6767c9"/><stop offset="0.6" stop-color="#6767c9"/><stop offset="1" stop-color="#2e2e5a"/></linearGradient><linearGradient id="b13" x1="0" y1="0" x2="0" y2="1"><stop offset="0" stop-color="#8bd4d4"/><stop offset="0.1" stop-color="#64c6c6"/><stop offset="0.6" stop-color="#64c6c6"/><stop offset="1" stop-color="#2d5959"/></linearGradient><linearGradient id="b14" x1="0" y1="0" x2="0" y2="1"><stop offset="0" stop-color="#d48bd4"/><stop offset="0.1" stop-color="#c664c6"/><stop offset="0.6" stop-color="#c664c6"/><stop offset="1" stop-color="#592d59"/></linearGradient><linearGradient id="b15" x1="0" y1="0" x2="0" y2="1"><stop offset="0" stop-color="#d4d48b"/><stop offset="0.1" stop-color="#c6c664"/><stop offset="0.6" stop-color="#c6c664"/><stop offset="1" stop-color="#59592d"/></linearGradient><linearGradient id="b20" x1="0" y1="0" x2="0" y2="1"><stop offset="0" stop-color="#d57878"/><stop offset="0.1" stop-color="#c74b4b"/><stop offset="0.6" stop-color="#c74b4b"/><stop offset="1" stop-color="#5a2222"/></linearGradient><linearGradient id="b21" x1="0" y1="0" x2="0" y2="1"><stop offset="0" stop-color="#78d378"/><stop offset="0.1" stop-color="#4bc44b"/><stop offset="0.6" stop-color="#4bc44b"/><stop offset="1" stop-color="#225822"/></linearGradient><linearGradient id="b22" x1="0" y1="0" x2="0" y2="1"><stop offset="0" stop-color="#7b7bd5"/><stop offset="0.1" stop-color="#4f4fc7"/><stop offset="0.6" stop-color="#4f4fc7"/><stop offset="1" stop-color="#24245a"/></linearGradient><linearGradient id="b23" x1="0" y1="0" x2="0" y2="1"><stop offset="0" stop-color="#78d3d3"/><stop offset="0.1" stop-color="#4bc4c4"/><stop offset="0.6" stop-color="#4bc4c4"/><stop offset="1" stop-color="#225858"/></linearGradient><linearGradient id="b24" x1="0" y1="0" x2="0" y2="1"><stop offset="0" stop-color="#d378d3"/><stop offset="0.1" stop-color="#c44bc4"/><stop offset="0.6" stop-color="#c44bc4"/><stop offset="1" stop-color="#582258"/></linearGradient><linearGradient id="b25" x1="0" y1="0" x2="0" y2="1"><stop offset="0" stop-color="#d3d378"/><stop offset="0.1" stop-color="#c4c44b"/><stop offset="0.6" stop-color="#c4c44b"/><stop offset="1" stop-color="#585822"/></linearGradient><linearGradient id="b30" x1="0" y1="0" x2="0" y2="1"><stop offset="0" stop-color="#d46b6b"/><stop offset="0.1" stop-color="#c63a3a"/><stop offset="0.6" stop-color="#c63a3a"/><stop offset="1" stop-color="#591a1a"/></linearGradient><linearGradient id="b31" x1="0" y1="0" x2="0" y2="1"><stop offset="0" stop-color="#6bd16b"/><stop offset="0.1" stop-color="#3ac23a"/><stop offset="0.6" stop-color="#3ac23a"/><stop offset="1" stop-color="#1a571a"/></linearGradient><linearGradient id="b32" x1="0" y1="0" x2="0" y2="1"><stop offset="0" stop-color="#6e6ed4"/><stop offset="0.1" stop-color="#3e3ec6"/><stop offset="0.6" stop-color="#3e3ec6"/><stop offset="1" stop-color="#1c1c59"/></linearGradient><linearGradient id="b33" x1="0" y1="0" x2="0" y2="1"><stop offset="0" stop-color="#6bd1d1"/><stop offset="0.1" stop-color="#3ac2c2"/><stop offset="0.6" stop-color="#3ac2c2"/><stop offset="1" stop-color="#1a5757"/></linearGradient><linearGradient id="b34" x1="0" y1="0" x2="0" y2="1"><stop offset="0" stop-color="#d16bd1"/><stop offset="0.1" stop-color="#c23ac2"/><stop offset="0.6" stop-color="#c23ac2"/><stop offset="1" stop-color="#571a57"/></linearGradient><linearGradient id="b35" x1="0" y1="0" x2="0" y2="1"><stop offset="0" stop-color="#d1d16b"/><stop offset="0.1" stop-color="#c2c23a"/><stop offset="0.6" stop-color="#c2c23a"/><stop offset="1" stop-color="#57571a"/></linearGradient><linearGradient id="b40" x1="0" y1="0" x2="0" y2="1"><stop offset="0" stop-color="#d24f4f"/><stop offset="0.1" stop-color="#c31414"/><stop offset="0.6" stop-color="#c31414"/><stop offset="1" stop-color="#580909"/></linearGradient><linearGradient id="b41" x1="0" y1="0" x2="0" y2="1"><stop offset="0" stop-color="#4fce4f"/><stop offset="0.1" stop-color="#14be14"/><stop offset="0.6" stop-color="#14be14"/><stop offset="1" stop-color="#095509"/></linearGradient><linearGradient id="b42" x1="0" y1="0" x2="0" y2="1"><stop offset="0" stop-color="#5252d2"/><stop offset="0.1" stop-color="#1919c3"/><stop offset="0.6" stop-color="#1919c3"/><stop offset="1" stop-color="#0b0b58"/></linearGradient><linearGradient id="b43" x1="0" y1="0" x2="0" y2="1"><stop offset="0" stop-color="#4fcece"/><stop offset="0.1" stop-color="#14bebe"/><stop offset="0.6" stop-color="#14bebe"/><stop offset="1" stop-color="#095555"/></linearGradient><linearGradient id="b44" x1="0" y1="0" x2="0" y2="1"><stop offset="0" stop-color="#ce4fce"/><stop offset="0.1" stop-color="#be14be"/><stop offset="0.6" stop-color="#be14be"/><stop offset="1" stop-color="#550955"/></linearGradient><linearGradient id="b45" x1="0" y1="0" x2="0" y2="1"><stop offset="0" stop-color="#cece4f"/><stop offset="0.1" stop-color="#bebe14"/><stop offset="0.6" stop-color="#bebe14"/><stop offset="1" stop-color="#555509"/></linearGradient></defs><rect x="872.8" y="1100.7" width="14.8" height="201.6" fill="#000"/><rect x="874.4" y="1102.4" width="11.6" height="199.9" fill="url(#bw)"/><rect x="922.5" y="1067.5" width="14.8" height="234.8" fill="#000"/><rect x="924.1" y="1069.2" width="11.6" height="233.1" fill="url(#b00)"/><rect x="937.3" y="1126.8" width="14.8" height="175.5" fill="#000"/><rect x="938.9" y="1128.5" width="11.6" height="173.8" fill="url(#b01)"/><rect x="952.0" y="1100.7" width="14.8" height="201.6" fill="#000"/><rect x="953.6" y="1102.4" width="11.6" height="199.9" fill="url(#b02)"/><rect x="966.8" y="1109.9" width="14.8" height="192.4" fill="#000"/><rect x="968.4" y="1111.6" width="11.6" height="190.7" fill="url(#b03)"/><rect x="981.6" y="1093.3" width="14.8" height="209.0" fill="#000"/><rect x="983.2" y="1095.0" width="11.6" height="207.3" fill="url(#b04)"/><rect x="996.3" y="1105.9" width="14.8" height="196.4" fill="#000"/><rect x="997.9" y="1107.6" width="11.6" height="194.7" fill="url(#b05)"/><rect x="1058.9" y="1054.2" width="14.8" height="248.1" fill="#000"/><rect x="1060.5" y="1055.9" width="11.6" height="246.4" fill="url(#b10)"/><rect x="1073.6" y="1131.9" width="14.8" height="170.4" fill="#000"/><rect x="1075.2" y="1133.6" width="11.6" height="168.7" fill="url(#b11)"/><rect x="1088.4" y="1144.5" width="14.8" height="157.8" fill="#000"/><rect x="1090.0" y="1146.2" width="11.6" height="156.1" fill="url(#b12)"/><rect x="1103.1" y="1128.6" width="14.8" height="173.7" fill="#000"/><rect x="1104.7" y="1130.3" width="11.6" height="172.0" fill="url(#b13)"/><rect x="1117.9" y="1115.1" width="14.8" height="187.2" fill="#000"/><rect x="1119.5" y="1116.8" width="11.6" height="185.5" fill="url(#b14)"/><rect x="1132.6" y="1121.1" width="14.8" height="181.2" fill="#000"/><rect x="1134.2" y="1122.8" width="11.6" height="179.5" fill="url(#b15)"/><rect x="1195.2" y="1073.1" width="14.8" height="229.2" fill="#000"/><rect x="1196.8" y="1074.8" width="11.6" height="227.5" fill="url(#b20)"/><rect x="1210.0" y="1128.6" width="14.8" height="173.7" fill="#000"/><rect x="1211.6" y="1130.3" width="11.6" height="172.0" fill="url(#b21)"/><rect x="1224.7" y="1183.8" width="14.8" height="118.5" fill="#000"/><rect x="1226.3" y="1185.5" width="11.6" height="116.8" fill="url(#b22)"/><rect x="1239.5" y="1143.2" width="14.8" height="159.1" fill="#000"/><rect x="1241.1" y="1144.9" width="11.6" height="157.4" fill="url(#b23)"/><rect x="1254.2" y="1136.0" width="14.8" height="166.3" fill="#000"/><rect x="1255.8" y="1137.7" width="11.6" height="164.6" fill="url(#b24)"/><rect x="1269.0" y="1119.3" width="14.8" height="183.0" fill="#000"/><rect x="1270.6" y="1121.0" width="11.6" height="181.3" fill="url(#b25)"/><rect x="1331.6" y="1074.2" width="14.8" height="228.1" fill="#000"/><rect x="1333.2" y="1075.9" width="11.6" height="226.4" fill="url(#b30)"/><rect x="1346.3" y="1124.7" width="14.8" height="177.6" fill="#000"/><rect x="1347.9" y="1126.4" width="11.6" height="175.9" fill="url(#b31)"/><rect x="1361.1" y="1143.2" width="14.8" height="159.1" fill="#000"/><rect x="1362.7" y="1144.9" width="11.6" height="157.4" fill="url(#b32)"/><rect x="1375.8" y="1150.6" width="14.8" height="151.7" fill="#000"/><rect x="1377.4" y="1152.3" width="11.6" height="150.0" fill="url(#b33)"/><rect x="1390.6" y="1160.0" width="14.8" height="142.3" fill="#000"/><rect x="1392.2" y="1161.7" width="11.6" height="140.6" fill="url(#b34)"/><rect x="1405.3" y="1113.1" width="14.8" height="189.2" fill="#000"/><rect x="1406.9" y="1114.8" width="11.6" height="187.5" fill="url(#b35)"/><rect x="1467.9" y="1020.7" width="14.8" height="281.6" fill="#000"/><rect x="1469.5" y="1022.4" width="11.6" height="279.9" fill="url(#b40)"/><rect x="1482.6" y="1115.1" width="14.8" height="187.2" fill="#000"/><rect x="1484.2" y="1116.8" width="11.6" height="185.5" fill="url(#b41)"/><rect x="1497.4" y="996.7" width="14.8" height="305.6" fill="#000"/><rect x="1499.0" y="998.4" width="11.6" height="303.9" fill="url(#b42)"/><rect x="1512.2" y="1148.3" width="14.8" height="154.0" fill="#000"/><rect x="1513.8" y="1150.0" width="11.6" height="152.3" fill="url(#b43)"/><rect x="1526.9" y="1161.1" width="14.8" height="141.2" fill="#000"/><rect x="1528.5" y="1162.8" width="11.6" height="139.5" fill="url(#b44)"/><rect x="1541.7" y="1105.9" width="14.8" height="196.4" fill="#000"/><rect x="1543.3" y="1107.6" width="11.6" height="194.7" fill="url(#b45)"/><line x1="771.8" y1="1078.2" x2="1592.3" y2="1078.2" stroke="#e02020" stroke-width="2.2" opacity="0.9"/><line x1="771.8" y1="1235.4" x2="1592.3" y2="1235.4" stroke="#e8e830" stroke-width="2.2" opacity="0.9"/><line x1="771.8" y1="1280.3" x2="1592.3" y2="1280.3" stroke="#1f8f1f" stroke-width="2.2" opacity="0.9"/><line x1="771.8" y1="963.4" x2="771.8" y2="1311.3" stroke="#a0a0a0" stroke-width="2.4"/><line x1="1592.3" y1="963.4" x2="1592.3" y2="1311.3" stroke="#a0a0a0" stroke-width="2.4"/><line x1="771.8" y1="1302.3" x2="1592.3" y2="1302.3" stroke="#a0a0a0" stroke-width="2.4"/><line x1="908.7" y1="1302.3" x2="908.7" y2="1310.3" stroke="#e0e0e0" stroke-width="2"/><line x1="1044.9" y1="1302.3" x2="1044.9" y2="1310.3" stroke="#e0e0e0" stroke-width="2"/><line x1="1181.5" y1="1302.3" x2="1181.5" y2="1310.3" stroke="#e0e0e0" stroke-width="2"/><line x1="1319.5" y1="1302.3" x2="1319.5" y2="1310.3" stroke="#e0e0e0" stroke-width="2"/><line x1="1456.1" y1="1302.3" x2="1456.1" y2="1310.3" stroke="#e0e0e0" stroke-width="2"/><text x="840.4" y="1324.5" font-size="20" fill="#e0e0e0" text-anchor="middle" font-weight="normal" >100</text><text x="976.6" y="1324.5" font-size="20" fill="#e0e0e0" text-anchor="middle" font-weight="normal" >20%</text><text x="1112.9" y="1324.5" font-size="20" fill="#e0e0e0" text-anchor="middle" font-weight="normal" >40%</text><text x="1251.2" y="1324.5" font-size="20" fill="#e0e0e0" text-anchor="middle" font-weight="normal" >60%</text><text x="1387.5" y="1324.5" font-size="20" fill="#e0e0e0" text-anchor="middle" font-weight="normal" >80%</text><text x="1523.7" y="1324.5" font-size="20" fill="#e0e0e0" text-anchor="middle" font-weight="normal" >100%</text><text x="319.5" y="1086.5" font-size="40" fill="#f2f2f2" text-anchor="start" font-weight="normal" textLength="299.0" lengthAdjust="spacingAndGlyphs" >Current Reading</text><text x="320.5" y="1143.7" font-size="34" fill="#f2f2f2" text-anchor="start" font-weight="normal" textLength="138.5" lengthAdjust="spacingAndGlyphs" >x: 0.4163</text><text x="320.5" y="1198.3" font-size="34" fill="#f2f2f2" text-anchor="start" font-weight="normal" textLength="138.5" lengthAdjust="spacingAndGlyphs" >y: 0.5077</text><text x="320.5" y="1252.9" font-size="34" fill="#f2f2f2" text-anchor="start" font-weight="normal" textLength="150.0" lengthAdjust="spacingAndGlyphs" >fL: 47.249</text><text x="320.0" y="1308.9" font-size="34" fill="#f2f2f2" text-anchor="start" font-weight="normal" textLength="237.5" lengthAdjust="spacingAndGlyphs" >cd/m&#178;: 161.887</text><rect x="1623.6" y="254.6" width="926.5" height="764.5" fill="#333333" stroke="#c4c000" stroke-width="9.4"/><rect x="1667.5" y="289.5" width="877.5" height="684.9" fill="#222222" stroke="#a0a0a0" stroke-width="2"/><text x="2089.0" y="282.6" font-size="19" fill="#e0e0e0" text-anchor="middle" font-weight="normal" >CIE 1931 xy</text><line x1="1667.5" y1="974.4" x2="1667.5" y2="982.4" stroke="#e0e0e0" stroke-width="2"/><text x="1667.5" y="1004.5" font-size="20.5" fill="#e0e0e0" text-anchor="middle" font-weight="normal" >0</text><line x1="1659.5" y1="975.0" x2="1667.5" y2="975.0" stroke="#e0e0e0" stroke-width="2"/><text x="1658.5" y="982.5" font-size="20.5" fill="#e0e0e0" text-anchor="end" font-weight="normal" >0</text><line x1="1772.1" y1="974.4" x2="1772.1" y2="982.4" stroke="#e0e0e0" stroke-width="2"/><text x="1772.1" y="1004.5" font-size="20.5" fill="#e0e0e0" text-anchor="middle" font-weight="normal" >0.1</text><line x1="1659.5" y1="893.6" x2="1667.5" y2="893.6" stroke="#e0e0e0" stroke-width="2"/><text x="1658.5" y="901.1" font-size="20.5" fill="#e0e0e0" text-anchor="end" font-weight="normal" >0.1</text><line x1="1876.7" y1="974.4" x2="1876.7" y2="982.4" stroke="#e0e0e0" stroke-width="2"/><text x="1876.7" y="1004.5" font-size="20.5" fill="#e0e0e0" text-anchor="middle" font-weight="normal" >0.2</text><line x1="1659.5" y1="812.3" x2="1667.5" y2="812.3" stroke="#e0e0e0" stroke-width="2"/><text x="1658.5" y="819.8" font-size="20.5" fill="#e0e0e0" text-anchor="end" font-weight="normal" >0.2</text><line x1="1981.3" y1="974.4" x2="1981.3" y2="982.4" stroke="#e0e0e0" stroke-width="2"/><text x="1981.3" y="1004.5" font-size="20.5" fill="#e0e0e0" text-anchor="middle" font-weight="normal" >0.3</text><line x1="1659.5" y1="731.0" x2="1667.5" y2="731.0" stroke="#e0e0e0" stroke-width="2"/><text x="1658.5" y="738.5" font-size="20.5" fill="#e0e0e0" text-anchor="end" font-weight="normal" >0.3</text><line x1="2085.9" y1="974.4" x2="2085.9" y2="982.4" stroke="#e0e0e0" stroke-width="2"/><text x="2085.9" y="1004.5" font-size="20.5" fill="#e0e0e0" text-anchor="middle" font-weight="normal" >0.4</text><line x1="1659.5" y1="649.6" x2="1667.5" y2="649.6" stroke="#e0e0e0" stroke-width="2"/><text x="1658.5" y="657.1" font-size="20.5" fill="#e0e0e0" text-anchor="end" font-weight="normal" >0.4</text><line x1="2190.5" y1="974.4" x2="2190.5" y2="982.4" stroke="#e0e0e0" stroke-width="2"/><text x="2190.5" y="1004.5" font-size="20.5" fill="#e0e0e0" text-anchor="middle" font-weight="normal" >0.5</text><line x1="1659.5" y1="568.2" x2="1667.5" y2="568.2" stroke="#e0e0e0" stroke-width="2"/><text x="1658.5" y="575.8" font-size="20.5" fill="#e0e0e0" text-anchor="end" font-weight="normal" >0.5</text><line x1="2295.1" y1="974.4" x2="2295.1" y2="982.4" stroke="#e0e0e0" stroke-width="2"/><text x="2295.1" y="1004.5" font-size="20.5" fill="#e0e0e0" text-anchor="middle" font-weight="normal" >0.6</text><line x1="1659.5" y1="486.9" x2="1667.5" y2="486.9" stroke="#e0e0e0" stroke-width="2"/><text x="1658.5" y="494.4" font-size="20.5" fill="#e0e0e0" text-anchor="end" font-weight="normal" >0.6</text><line x1="2399.7" y1="974.4" x2="2399.7" y2="982.4" stroke="#e0e0e0" stroke-width="2"/><text x="2399.7" y="1004.5" font-size="20.5" fill="#e0e0e0" text-anchor="middle" font-weight="normal" >0.7</text><line x1="1659.5" y1="405.6" x2="1667.5" y2="405.6" stroke="#e0e0e0" stroke-width="2"/><text x="1658.5" y="413.1" font-size="20.5" fill="#e0e0e0" text-anchor="end" font-weight="normal" >0.7</text><line x1="2504.3" y1="974.4" x2="2504.3" y2="982.4" stroke="#e0e0e0" stroke-width="2"/><text x="2504.3" y="1004.5" font-size="20.5" fill="#e0e0e0" text-anchor="middle" font-weight="normal" >0.8</text><line x1="1659.5" y1="324.2" x2="1667.5" y2="324.2" stroke="#e0e0e0" stroke-width="2"/><text x="1658.5" y="331.7" font-size="20.5" fill="#e0e0e0" text-anchor="end" font-weight="normal" >0.8</text><defs><linearGradient id="gTH" x1="0" y1="0" x2="0" y2="1"><stop offset="0" stop-color="#3a3a3a"/><stop offset="0.45" stop-color="#2a2a2a"/><stop offset="0.5" stop-color="#1a1a1a"/><stop offset="1" stop-color="#101010"/></linearGradient><linearGradient id="gTD" x1="0" y1="0" x2="0" y2="1"><stop offset="0" stop-color="#4a4a4a"/><stop offset="1" stop-color="#3c3c3c"/></linearGradient><linearGradient id="gTL" x1="0" y1="0" x2="0" y2="1"><stop offset="0" stop-color="#8e8e8e"/><stop offset="1" stop-color="#7e7e7e"/></linearGradient></defs><rect x="1619" y="1033" width="815" height="276" fill="#1a1a1a"/><rect x="1621.5" y="1035" width="810.5" height="42" fill="url(#gTH)"/><text x="1913.5" y="1065.0" font-size="24" fill="#f0f0f0" text-anchor="start" font-weight="normal" textLength="54.0" lengthAdjust="spacingAndGlyphs" >20%</text><text x="2021.8" y="1065.0" font-size="24" fill="#f0f0f0" text-anchor="start" font-weight="normal" textLength="54.0" lengthAdjust="spacingAndGlyphs" >40%</text><text x="2131.2" y="1065.0" font-size="24" fill="#f0f0f0" text-anchor="start" font-weight="normal" textLength="54.0" lengthAdjust="spacingAndGlyphs" >60%</text><text x="2240.5" y="1065.0" font-size="24" fill="#f0f0f0" text-anchor="start" font-weight="normal" textLength="54.0" lengthAdjust="spacingAndGlyphs" >80%</text><text x="2343.0" y="1065.0" font-size="24" fill="#f0f0f0" text-anchor="start" font-weight="normal" textLength="70.0" lengthAdjust="spacingAndGlyphs" >100%</text><rect x="1621.5" y="1077.0" width="810.5" height="38.4" fill="url(#gTD)"/><text x="1646.0" y="1105.5" font-size="25" fill="#f2f2f2" text-anchor="start" font-weight="bold" textLength="117.0" lengthAdjust="spacingAndGlyphs" >x: CIE31</text><text x="1893.7" y="1105.5" font-size="25" fill="#f2f2f2" text-anchor="start" font-weight="normal" textLength="57.0" lengthAdjust="spacingAndGlyphs" >0.32</text><text x="2003.0" y="1105.5" font-size="25" fill="#f2f2f2" text-anchor="start" font-weight="normal" textLength="57.0" lengthAdjust="spacingAndGlyphs" >0.34</text><text x="2112.4" y="1105.5" font-size="25" fill="#f2f2f2" text-anchor="start" font-weight="normal" textLength="57.0" lengthAdjust="spacingAndGlyphs" >0.37</text><text x="2221.8" y="1105.5" font-size="25" fill="#f2f2f2" text-anchor="start" font-weight="normal" textLength="57.0" lengthAdjust="spacingAndGlyphs" >0.39</text><text x="2331.0" y="1105.5" font-size="25" fill="#f2f2f2" text-anchor="start" font-weight="normal" textLength="57.0" lengthAdjust="spacingAndGlyphs" >0.42</text><rect x="1621.5" y="1115.4" width="810.5" height="38.4" fill="url(#gTL)"/><text x="1646.0" y="1143.9" font-size="25" fill="#f2f2f2" text-anchor="start" font-weight="bold" textLength="117.0" lengthAdjust="spacingAndGlyphs" >y: CIE31</text><text x="1893.7" y="1143.9" font-size="25" fill="#f2f2f2" text-anchor="start" font-weight="normal" textLength="57.0" lengthAdjust="spacingAndGlyphs" >0.35</text><text x="2003.0" y="1143.9" font-size="25" fill="#f2f2f2" text-anchor="start" font-weight="normal" textLength="57.0" lengthAdjust="spacingAndGlyphs" >0.39</text><text x="2112.4" y="1143.9" font-size="25" fill="#f2f2f2" text-anchor="start" font-weight="normal" textLength="57.0" lengthAdjust="spacingAndGlyphs" >0.43</text><text x="2221.8" y="1143.9" font-size="25" fill="#f2f2f2" text-anchor="start" font-weight="normal" textLength="57.0" lengthAdjust="spacingAndGlyphs" >0.47</text><text x="2331.0" y="1143.9" font-size="25" fill="#f2f2f2" text-anchor="start" font-weight="normal" textLength="57.0" lengthAdjust="spacingAndGlyphs" >0.51</text><rect x="1621.5" y="1153.8" width="810.5" height="38.4" fill="url(#gTD)"/><text x="1646.0" y="1182.3" font-size="25" fill="#f2f2f2" text-anchor="start" font-weight="bold" textLength="19.0" lengthAdjust="spacingAndGlyphs" >Y</text><text x="1893.7" y="1182.3" font-size="25" fill="#f2f2f2" text-anchor="start" font-weight="normal" textLength="91.0" lengthAdjust="spacingAndGlyphs" >187.13</text><text x="2003.0" y="1182.3" font-size="25" fill="#f2f2f2" text-anchor="start" font-weight="normal" textLength="91.0" lengthAdjust="spacingAndGlyphs" >177.55</text><text x="2112.4" y="1182.3" font-size="25" fill="#f2f2f2" text-anchor="start" font-weight="normal" textLength="91.0" lengthAdjust="spacingAndGlyphs" >170.69</text><text x="2221.8" y="1182.3" font-size="25" fill="#f2f2f2" text-anchor="start" font-weight="normal" textLength="91.0" lengthAdjust="spacingAndGlyphs" >166.10</text><text x="2331.0" y="1182.3" font-size="25" fill="#f2f2f2" text-anchor="start" font-weight="normal" textLength="91.0" lengthAdjust="spacingAndGlyphs" >161.89</text><rect x="1621.5" y="1192.2" width="810.5" height="38.4" fill="url(#gTL)"/><text x="1646.0" y="1220.7" font-size="25" fill="#f2f2f2" text-anchor="start" font-weight="bold" textLength="212.0" lengthAdjust="spacingAndGlyphs" >Target x:CIE31</text><text x="1893.7" y="1220.7" font-size="25" fill="#f2f2f2" text-anchor="start" font-weight="normal" textLength="57.0" lengthAdjust="spacingAndGlyphs" >0.33</text><text x="2003.0" y="1220.7" font-size="25" fill="#f2f2f2" text-anchor="start" font-weight="normal" textLength="57.0" lengthAdjust="spacingAndGlyphs" >0.36</text><text x="2112.4" y="1220.7" font-size="25" fill="#f2f2f2" text-anchor="start" font-weight="normal" textLength="57.0" lengthAdjust="spacingAndGlyphs" >0.38</text><text x="2221.8" y="1220.7" font-size="25" fill="#f2f2f2" text-anchor="start" font-weight="normal" textLength="57.0" lengthAdjust="spacingAndGlyphs" >0.40</text><text x="2331.0" y="1220.7" font-size="25" fill="#f2f2f2" text-anchor="start" font-weight="normal" textLength="57.0" lengthAdjust="spacingAndGlyphs" >0.42</text><rect x="1621.5" y="1230.6" width="810.5" height="38.4" fill="url(#gTD)"/><text x="1646.0" y="1259.1" font-size="25" fill="#f2f2f2" text-anchor="start" font-weight="bold" textLength="212.0" lengthAdjust="spacingAndGlyphs" >Target y:CIE31</text><text x="1893.7" y="1259.1" font-size="25" fill="#f2f2f2" text-anchor="start" font-weight="normal" textLength="57.0" lengthAdjust="spacingAndGlyphs" >0.36</text><text x="2003.0" y="1259.1" font-size="25" fill="#f2f2f2" text-anchor="start" font-weight="normal" textLength="57.0" lengthAdjust="spacingAndGlyphs" >0.40</text><text x="2112.4" y="1259.1" font-size="25" fill="#f2f2f2" text-anchor="start" font-weight="normal" textLength="57.0" lengthAdjust="spacingAndGlyphs" >0.44</text><text x="2221.8" y="1259.1" font-size="25" fill="#f2f2f2" text-anchor="start" font-weight="normal" textLength="57.0" lengthAdjust="spacingAndGlyphs" >0.47</text><text x="2331.0" y="1259.1" font-size="25" fill="#f2f2f2" text-anchor="start" font-weight="normal" textLength="57.0" lengthAdjust="spacingAndGlyphs" >0.51</text><rect x="1621.5" y="1269.0" width="810.5" height="38.4" fill="url(#gTL)"/><text x="1646.0" y="1297.5" font-size="25" fill="#f2f2f2" text-anchor="start" font-weight="bold" textLength="123.0" lengthAdjust="spacingAndGlyphs" >Target Y</text><text x="1893.7" y="1297.5" font-size="25" fill="#f2f2f2" text-anchor="start" font-weight="normal" textLength="91.0" lengthAdjust="spacingAndGlyphs" >249.81</text><text x="2003.0" y="1297.5" font-size="25" fill="#f2f2f2" text-anchor="start" font-weight="normal" textLength="91.0" lengthAdjust="spacingAndGlyphs" >245.43</text><text x="2112.4" y="1297.5" font-size="25" fill="#f2f2f2" text-anchor="start" font-weight="normal" textLength="91.0" lengthAdjust="spacingAndGlyphs" >242.06</text><text x="2221.8" y="1297.5" font-size="25" fill="#f2f2f2" text-anchor="start" font-weight="normal" textLength="91.0" lengthAdjust="spacingAndGlyphs" >239.42</text><text x="2331.0" y="1297.5" font-size="25" fill="#f2f2f2" text-anchor="start" font-weight="normal" textLength="91.0" lengthAdjust="spacingAndGlyphs" >236.86</text><rect x="300" y="1435" width="2260" height="93" fill="#2b2b2b"/><defs><linearGradient id="gTB" x1="0" y1="0" x2="0" y2="1"><stop offset="0" stop-color="#9a9a9a"/><stop offset="0.6" stop-color="#858585"/><stop offset="1" stop-color="#5e5e5e"/></linearGradient><linearGradient id="gTBsel" x1="0" y1="0" x2="0" y2="1"><stop offset="0" stop-color="#1a1a1c"/><stop offset="0.5" stop-color="#2a2a2a"/><stop offset="1" stop-color="#3a3a3a"/></linearGradient><linearGradient id="gStrip" x1="0" y1="0" x2="0" y2="1"><stop offset="0" stop-color="#4a4a4a"/><stop offset="1" stop-color="#2a2a2a"/></linearGradient></defs><rect x="301.5" y="1435.5" width="67.5" height="96" rx="6" fill="url(#gTB)"/><circle cx="335" cy="1449" r="11" fill="url(#gCirc)"/><path d="M328 1452 L342 1452 L335 1445 Z" fill="#333"/><rect x="309.5" y="1475" width="52" height="45.5" rx="5" fill="#ffff00" stroke="#cfcf40" stroke-width="1"/><rect x="377.8" y="1435.5" width="224.9" height="96" rx="6" fill="url(#gTB)"/><text x="490.3" y="1519.8" font-size="16" fill="#3a3a3a" text-anchor="middle" font-weight="bold" >20%</text><rect x="386.8" y="1444" width="206.9" height="53" rx="5" fill="#c1c2a3" stroke="rgba(0,0,0,0.18)" stroke-width="1.2"/><rect x="605.75" y="1435.5" width="224.9" height="96" rx="6" fill="url(#gTB)"/><text x="718.2" y="1519.8" font-size="16" fill="#3a3a3a" text-anchor="middle" font-weight="bold" >40%</text><rect x="614.75" y="1444" width="206.9" height="53" rx="5" fill="#c4c38a" stroke="rgba(0,0,0,0.18)" stroke-width="1.2"/><rect x="833.7" y="1435.5" width="224.9" height="96" rx="6" fill="url(#gTB)"/><text x="946.2" y="1519.8" font-size="16" fill="#3a3a3a" text-anchor="middle" font-weight="bold" >60%</text><rect x="842.7" y="1444" width="206.9" height="53" rx="5" fill="#c1bf6b" stroke="rgba(0,0,0,0.18)" stroke-width="1.2"/><rect x="1061.6499999999999" y="1435.5" width="224.9" height="96" rx="6" fill="url(#gTB)"/><text x="1174.1" y="1519.8" font-size="16" fill="#3a3a3a" text-anchor="middle" font-weight="bold" >80%</text><rect x="1070.6499999999999" y="1444" width="206.9" height="53" rx="5" fill="#c2c24e" stroke="rgba(0,0,0,0.18)" stroke-width="1.2"/><rect x="1289.6" y="1435.5" width="224.9" height="96" rx="6" fill="url(#gTBsel)"/><text x="1402.1" y="1519.8" font-size="16" fill="#ffffff" text-anchor="middle" font-weight="bold" >100%</text><rect x="1298.6" y="1444" width="206.9" height="53" rx="5" fill="#c4c200" stroke="rgba(0,0,0,0.18)" stroke-width="1.2"/><rect x="1515" y="1435.5" width="561" height="96" fill="url(#gStrip)"/><defs><linearGradient id="gCB" x1="0" y1="0" x2="0" y2="1"><stop offset="0" stop-color="#a8a8a8"/><stop offset="0.5" stop-color="#929292"/><stop offset="1" stop-color="#6e6e6e"/></linearGradient><radialGradient id="gCirc" cx="0.5" cy="0.15" r="0.9"><stop offset="0" stop-color="#6a6a6a"/><stop offset="1" stop-color="#a0a0a0"/></radialGradient><radialGradient id="gCircD" cx="0.5" cy="0.15" r="0.9"><stop offset="0" stop-color="#2a2a2a"/><stop offset="1" stop-color="#3e3e3e"/></radialGradient></defs><rect x="2076.3" y="1436" width="71.7" height="27.6" rx="4" fill="url(#gCB)"/><circle cx="2112" cy="1449" r="11" fill="url(#gCirc)"/><path d="M2104.5 1452 L2119.5 1452 L2112 1445 Z" fill="#2a2a2a"/><rect x="2076.3" y="1464.5" width="71.7" height="63.5" rx="3" fill="url(#gCB)"/><rect x="2090.5" y="1474" width="43" height="44" rx="6" fill="#9a9a9a" stroke="#1a1a1a" stroke-width="4"/><rect x="2102" y="1485" width="21" height="21" fill="#0a0a0a"/><rect x="2102" y="1485" width="21" height="10" fill="#222"/><rect x="2149" y="1436" width="67" height="43.5" fill="url(#gCB)"/><rect x="2216" y="1436" width="1" height="43.5" fill="#3a3a3a"/><circle cx="2183" cy="1458.2" r="14.5" fill="url(#gCirc)"/><rect x="2217" y="1436" width="67" height="43.5" fill="url(#gCB)"/><rect x="2284" y="1436" width="1" height="43.5" fill="#3a3a3a"/><circle cx="2251" cy="1458.2" r="14.5" fill="url(#gCirc)"/><rect x="2285" y="1436" width="67" height="43.5" fill="url(#gCB)"/><rect x="2352" y="1436" width="1" height="43.5" fill="#3a3a3a"/><circle cx="2319" cy="1458.2" r="14.5" fill="url(#gCirc)"/><rect x="2353" y="1436" width="67" height="43.5" fill="url(#gCB)"/><rect x="2420" y="1436" width="1" height="43.5" fill="#3a3a3a"/><circle cx="2387" cy="1458.2" r="14.5" fill="url(#gCirc)"/><rect x="2421" y="1436" width="67" height="43.5" fill="#303030"/><rect x="2488" y="1436" width="1" height="43.5" fill="#3a3a3a"/><circle cx="2455" cy="1458.2" r="14.5" fill="url(#gCircD)"/><rect x="2489" y="1436" width="67" height="43.5" fill="url(#gCB)"/><rect x="2556" y="1436" width="1" height="43.5" fill="#3a3a3a"/><circle cx="2523" cy="1458.2" r="14.5" fill="url(#gCirc)"/><rect x="2177.5" y="1452" width="12" height="12" fill="#2a2a2a"/><path d="M2248.5 1450 L2261 1458 L2248.5 1466 Z" fill="#2a2a2a"/><path d="M2313 1449 H2311 V1468 H2313 M2327 1449 H2329 V1468 H2327" fill="none" stroke="#2a2a2a" stroke-width="2.6"/><circle cx="2317.5" cy="1458.5" r="1.3" fill="#2a2a2a"/><circle cx="2322.5" cy="1458.5" r="1.3" fill="#2a2a2a"/><path d="M2387 1458 C2383 1452 2377 1452 2377 1458 C2377 1464 2383 1464 2387 1458 C2391 1452 2397 1452 2397 1458 C2397 1464 2391 1464 2387 1458 Z" fill="none" stroke="#2a2a2a" stroke-width="2.8"/><path d="M2446 1456 A9 9 0 0 1 2462 1452 M2464 1460 A9 9 0 0 1 2448 1464" fill="none" stroke="#1e1e1e" stroke-width="3"/><rect x="2149" y="1481.5" width="204" height="46.5" fill="url(#gCB)"/><rect x="2354.5" y="1481.5" width="205.5" height="46.5" fill="url(#gCB)"/><circle cx="2195.7" cy="1504.4" r="15" fill="url(#gCirc)"/><path d="M2195 1496 L2189 1504.5 L2195 1513 M2201.5 1496 L2195.5 1504.5 L2201.5 1513" fill="none" stroke="#333" stroke-width="2.6"/><text x="2235.0" y="1516.5" font-size="32" fill="#333333" text-anchor="start" font-weight="normal" textLength="76.5" lengthAdjust="spacingAndGlyphs" stroke="#333" stroke-width="1">Back</text><text x="2395.5" y="1516.5" font-size="32" fill="#333333" text-anchor="start" font-weight="normal" textLength="77.0" lengthAdjust="spacingAndGlyphs" stroke="#333" stroke-width="1">Next</text><circle cx="2516" cy="1504.4" r="15" fill="url(#gCirc)"/><path d="M2510 1496 L2516 1504.5 L2510 1513 M2516.5 1496 L2522.5 1504.5 L2516.5 1513" fill="none" stroke="#333" stroke-width="2.6"/></svg>
<div class="abs" style="background:conic-gradient(from -6.4deg at 1994.6px 707.4px, #009800 0deg, #0a9600 20.4deg,#4a9200 32.4deg,#969600 44.3deg,#8a4800 75.7deg,#990000 96.3deg,#9a0028 112.4deg,#980068 141.4deg,#880098 182.4deg,#5000a8 196.4deg,#3000b0 208.4deg,#0808b4 224.3deg,#0a1890 241.4deg,#0a3a90 256.4deg,#0a6a9c 268.4deg,#0a9a94 276.4deg,#00986a 285.4deg,#009830 302.4deg, #009800 360deg);clip-path:polygon(1849.6px 970.9px,1849.5px 971.0px,1849.4px 971.0px,1849.3px 971.0px,1849.2px 971.1px,1849.0px 971.1px,1848.8px 971.1px,1848.5px 971.1px,1848.2px 971.1px,1847.9px 971.1px,1847.5px 971.0px,1847.2px 971.0px,1846.8px 970.9px,1846.4px 970.7px,1846.0px 970.5px,1845.6px 970.3px,1845.2px 970.1px,1844.7px 969.7px,1844.2px 969.4px,1843.5px 969.0px,1842.9px 968.5px,1842.2px 968.0px,1841.4px 967.5px,1840.5px 966.8px,1839.5px 966.1px,1838.4px 965.4px,1837.2px 964.6px,1835.9px 963.8px,1834.5px 962.8px,1833.0px 961.8px,1831.3px 960.6px,1829.3px 959.2px,1827.1px 957.6px,1824.7px 955.9px,1822.3px 954.1px,1820.0px 952.4px,1818.1px 950.8px,1816.6px 949.4px,1815.4px 948.2px,1814.3px 947.0px,1813.3px 945.7px,1812.1px 944.3px,1810.8px 942.5px,1809.3px 940.6px,1807.6px 938.5px,1805.9px 936.2px,1804.1px 933.7px,1802.2px 931.0px,1800.1px 928.0px,1798.0px 924.7px,1795.8px 921.3px,1793.4px 917.6px,1791.0px 913.6px,1788.4px 909.2px,1785.7px 904.4px,1782.9px 899.2px,1780.0px 893.6px,1777.0px 887.7px,1773.9px 881.3px,1770.6px 874.5px,1767.2px 867.0px,1763.6px 859.1px,1759.7px 850.7px,1755.8px 841.9px,1751.7px 832.4px,1747.6px 822.4px,1743.5px 811.7px,1739.4px 800.4px,1735.2px 788.4px,1731.0px 775.9px,1726.7px 762.8px,1722.4px 749.2px,1718.1px 735.0px,1713.7px 720.2px,1709.1px 704.8px,1704.5px 688.7px,1700.0px 672.4px,1695.8px 655.8px,1692.1px 639.3px,1688.7px 622.5px,1685.6px 605.4px,1682.7px 588.1px,1680.2px 570.8px,1678.0px 553.7px,1676.1px 537.0px,1674.5px 520.6px,1673.2px 504.3px,1672.2px 488.1px,1671.5px 472.3px,1671.3px 457.0px,1671.6px 442.3px,1672.3px 428.1px,1673.4px 414.2px,1674.9px 400.7px,1676.8px 387.9px,1679.2px 375.9px,1682.0px 364.7px,1685.4px 354.4px,1689.2px 344.7px,1693.5px 335.8px,1698.1px 327.8px,1703.0px 320.6px,1708.2px 314.4px,1713.7px 309.3px,1719.6px 305.2px,1725.7px 302.0px,1732.1px 299.6px,1738.6px 297.9px,1745.2px 296.7px,1751.9px 296.2px,1758.8px 296.6px,1765.8px 297.7px,1772.8px 299.2px,1779.9px 301.0px,1787.0px 302.9px,1794.0px 305.0px,1801.1px 307.5px,1808.2px 310.3px,1815.4px 313.3px,1822.4px 316.3px,1829.3px 319.4px,1836.1px 322.5px,1842.9px 325.7px,1849.5px 328.9px,1856.2px 332.3px,1862.7px 335.7px,1869.3px 339.2px,1875.8px 342.7px,1882.2px 346.3px,1888.6px 350.0px,1895.0px 353.7px,1901.3px 357.5px,1907.7px 361.4px,1914.0px 365.3px,1920.3px 369.3px,1926.7px 373.3px,1933.0px 377.4px,1939.2px 381.6px,1945.5px 385.8px,1951.8px 390.0px,1958.0px 394.3px,1964.3px 398.6px,1970.5px 403.0px,1976.7px 407.4px,1983.0px 411.8px,1989.2px 416.3px,1995.4px 420.8px,2001.6px 425.3px,2007.9px 429.8px,2014.1px 434.4px,2020.3px 439.0px,2026.6px 443.6px,2032.8px 448.2px,2039.0px 452.9px,2045.3px 457.6px,2051.5px 462.3px,2057.8px 467.0px,2064.0px 471.7px,2070.2px 476.4px,2076.4px 481.1px,2082.6px 485.9px,2088.8px 490.6px,2095.0px 495.4px,2101.2px 500.1px,2107.4px 504.8px,2113.6px 509.6px,2119.7px 514.3px,2125.9px 519.0px,2132.0px 523.8px,2138.1px 528.5px,2144.2px 533.2px,2150.3px 537.9px,2156.3px 542.5px,2162.3px 547.2px,2168.3px 551.8px,2174.3px 556.4px,2180.2px 561.0px,2186.1px 565.6px,2192.0px 570.2px,2197.8px 574.7px,2203.6px 579.2px,2209.3px 583.6px,2215.0px 588.0px,2220.7px 592.4px,2226.3px 596.8px,2231.9px 601.1px,2237.4px 605.3px,2242.8px 609.6px,2248.2px 613.7px,2253.6px 617.9px,2258.8px 621.9px,2264.0px 626.0px,2269.2px 629.9px,2274.2px 633.8px,2279.2px 637.7px,2284.1px 641.5px,2288.9px 645.2px,2293.6px 648.9px,2298.1px 652.4px,2302.6px 655.9px,2306.9px 659.3px,2311.2px 662.5px,2315.3px 665.7px,2319.4px 668.9px,2323.3px 672.0px,2327.3px 675.0px,2331.1px 678.0px,2334.9px 680.9px,2338.5px 683.7px,2342.1px 686.5px,2345.5px 689.1px,2348.7px 691.6px,2351.6px 693.8px,2354.4px 696.0px,2357.3px 698.2px,2360.4px 700.6px,2363.9px 703.3px,2368.0px 706.5px,2372.6px 710.0px,2377.4px 713.8px,2382.3px 717.5px,2386.8px 721.1px,2390.8px 724.2px,2394.3px 726.9px,2397.5px 729.3px,2400.3px 731.6px,2403.0px 733.6px,2405.5px 735.6px,2408.0px 737.5px,2410.2px 739.2px,2412.2px 740.8px,2414.1px 742.2px,2415.9px 743.6px,2417.7px 745.0px,2419.6px 746.5px,2421.6px 748.0px,2423.7px 749.6px,2425.7px 751.2px,2427.7px 752.8px,2429.5px 754.2px,2431.1px 755.4px,2432.3px 756.3px,2433.4px 757.1px,2434.3px 757.8px,2435.0px 758.4px,2435.5px 758.8px,2436.0px 759.2px)"></div>
<div class="abs" style="background:linear-gradient(to bottom, #009800 0px, #009800 486.9px, #009a40 600.8px, #009a68 661.8px, #0a9a92 702.5px, #0a7aa0 735.0px, #0a4a98 775.7px, #0a2290 832.6px, #0810ac 918.1px, #1000b8 975.0px);clip-path:polygon(1815.4px 948.2px,1814.3px 947.0px,1813.3px 945.7px,1812.1px 944.3px,1810.8px 942.5px,1809.3px 940.6px,1807.6px 938.5px,1805.9px 936.2px,1804.1px 933.7px,1802.2px 931.0px,1800.1px 928.0px,1798.0px 924.7px,1795.8px 921.3px,1793.4px 917.6px,1791.0px 913.6px,1788.4px 909.2px,1785.7px 904.4px,1782.9px 899.2px,1780.0px 893.6px,1777.0px 887.7px,1773.9px 881.3px,1770.6px 874.5px,1767.2px 867.0px,1763.6px 859.1px,1759.7px 850.7px,1755.8px 841.9px,1751.7px 832.4px,1747.6px 822.4px,1743.5px 811.7px,1739.4px 800.4px,1735.2px 788.4px,1731.0px 775.9px,1726.7px 762.8px,1722.4px 749.2px,1718.1px 735.0px,1713.7px 720.2px,1709.1px 704.8px,1704.5px 688.7px,1700.0px 672.4px,1695.8px 655.8px,1692.1px 639.3px,1688.7px 622.5px,1685.6px 605.4px,1682.7px 588.1px,1680.2px 570.8px,1678.0px 553.7px,1676.1px 537.0px,1674.5px 520.6px,1673.2px 504.3px,1672.2px 488.1px,1671.5px 472.3px,1671.3px 457.0px,1671.6px 442.3px,1672.3px 428.1px,1673.4px 414.2px,1674.9px 400.7px,1676.8px 387.9px,1679.2px 375.9px,1682.0px 364.7px,1685.4px 354.4px,1689.2px 344.7px,1693.5px 335.8px,1698.1px 327.8px,1703.0px 320.6px,1708.2px 314.4px,1713.7px 309.3px,1719.6px 305.2px,1725.7px 302.0px,1732.1px 299.6px,1738.6px 297.9px,1745.2px 296.7px,1751.9px 296.2px,1758.8px 296.6px,1765.8px 297.7px,1772.8px 299.2px,1779.9px 301.0px,1787.0px 302.9px,1794.0px 305.0px,1801.1px 307.5px,1808.2px 310.3px,1815.4px 313.3px,1822.4px 316.3px,1829.3px 319.4px,1836.1px 322.5px,1842.9px 325.7px,1849.5px 328.9px,1856.2px 332.3px,1862.7px 335.7px,1869.3px 339.2px,1875.8px 342.7px,1882.2px 346.3px,1888.6px 350.0px,1895.0px 353.7px,1901.3px 357.5px,1907.7px 361.4px,1914.0px 365.3px,1920.3px 369.3px,1926.7px 373.3px,1933.0px 377.4px,1939.2px 381.6px,1945.5px 385.8px,1951.8px 390.0px,1958.0px 394.3px,1964.3px 398.6px,1970.5px 403.0px,1976.7px 407.4px,1983.0px 411.8px,1989.2px 416.3px,1995.4px 420.8px,2001.6px 425.3px,1981.3px 486.9px,1824.4px 926.2px)"></div>
<div class="abs" style="background:radial-gradient(circle at 1994.6px 707.4px, #ffffff 0px, rgba(255,255,255,0.85) 16px, rgba(255,255,255,0.38) 60px, rgba(255,255,255,0.1) 120px, rgba(255,255,255,0) 170px), conic-gradient(from -3.4deg at 1994.6px 707.4px, #00ff00 0deg, #ffff00 41.3deg,#ff8800 72.7deg,#ff0000 93.3deg,#ff00ff 180.0deg,#1010ff 221.3deg,#00ffff 273.3deg, #00ff00 360deg);clip-path:polygon(2336.9px 706.5px,1981.3px 486.9px,1824.4px 926.2px)"></div>
<div style="position:absolute;left:2291.5px;top:288px;width:255px;height:256px;background:#222"></div>
<div style="position:absolute;left:2296.4px;top:290.4px;width:249.2px;height:249.8px;border:1.6px solid #9a9a9a;box-sizing:border-box;overflow:hidden">
 <div style="position:absolute;inset:0;background:linear-gradient(116deg,#5a9800 0%,#8a9a00 40%,#9a9000 65%,#9a6a00 100%)"></div>
 <div style="position:absolute;inset:0;background:linear-gradient(116deg,#a8ff00 0%,#e0ff00 30%,#ffff10 52%,#ffd000 75%,#ffb000 100%);clip-path:polygon(0 10.8%,100% 89%,100% 100%,0 100%)"></div>
</div>
<svg width="2560" height="1528" viewBox="0 0 2560 1528"><rect x="2053.0" y="698.4" width="16.6" height="16.6" fill="none" stroke="#ffffff" stroke-width="2.0"/><rect x="2122.7" y="696.3" width="16.6" height="16.6" fill="none" stroke="#ffffff" stroke-width="2.0"/><rect x="2185.5" y="696.3" width="16.6" height="16.6" fill="none" stroke="#ffffff" stroke-width="2.0"/><rect x="2251.5" y="696.3" width="16.6" height="16.6" fill="none" stroke="#ffffff" stroke-width="2.0"/><rect x="2326.6" y="696.3" width="16.6" height="16.6" fill="none" stroke="#ffffff" stroke-width="2.0"/><rect x="1981.7" y="653.7" width="16.6" height="16.6" fill="none" stroke="#ffffff" stroke-width="2.0"/><rect x="1980.6" y="609.6" width="16.6" height="16.6" fill="none" stroke="#ffffff" stroke-width="2.0"/><rect x="1976.9" y="567.5" width="16.6" height="16.6" fill="none" stroke="#ffffff" stroke-width="2.0"/><rect x="1974.8" y="524.4" width="16.6" height="16.6" fill="none" stroke="#ffffff" stroke-width="2.0"/><rect x="1971.6" y="477.0" width="16.6" height="16.6" fill="none" stroke="#ffffff" stroke-width="2.0"/><rect x="1950.8" y="741.5" width="16.6" height="16.6" fill="none" stroke="#ffffff" stroke-width="2.0"/><rect x="1918.4" y="785.2" width="16.6" height="16.6" fill="none" stroke="#ffffff" stroke-width="2.0"/><rect x="1884.8" y="827.8" width="16.6" height="16.6" fill="none" stroke="#ffffff" stroke-width="2.0"/><rect x="1851.8" y="869.3" width="16.6" height="16.6" fill="none" stroke="#ffffff" stroke-width="2.0"/><rect x="1814.6" y="917.2" width="16.6" height="16.6" fill="none" stroke="#ffffff" stroke-width="2.0"/><rect x="1968.9" y="698.4" width="16.6" height="16.6" fill="none" stroke="#ffffff" stroke-width="2.0"/><rect x="1950.3" y="698.4" width="16.6" height="16.6" fill="none" stroke="#ffffff" stroke-width="2.0"/><rect x="1931.7" y="698.4" width="16.6" height="16.6" fill="none" stroke="#ffffff" stroke-width="2.0"/><rect x="1913.0" y="698.4" width="16.6" height="16.6" fill="none" stroke="#ffffff" stroke-width="2.0"/><rect x="1893.3" y="698.4" width="16.6" height="16.6" fill="none" stroke="#ffffff" stroke-width="2.0"/><rect x="1988.1" y="725.6" width="16.6" height="16.6" fill="none" stroke="#ffffff" stroke-width="2.0"/><rect x="1990.2" y="755.9" width="16.6" height="16.6" fill="none" stroke="#ffffff" stroke-width="2.0"/><rect x="1990.2" y="781.5" width="16.6" height="16.6" fill="none" stroke="#ffffff" stroke-width="2.0"/><rect x="1991.8" y="810.7" width="16.6" height="16.6" fill="none" stroke="#ffffff" stroke-width="2.0"/><rect x="1993.9" y="840.0" width="16.6" height="16.6" fill="none" stroke="#ffffff" stroke-width="2.0"/><rect x="2008.8" y="668.1" width="16.6" height="16.6" fill="none" stroke="#ffffff" stroke-width="2.0"/><rect x="2030.7" y="639.4" width="16.6" height="16.6" fill="none" stroke="#ffffff" stroke-width="2.0"/><rect x="2053.0" y="609.6" width="16.6" height="16.6" fill="none" stroke="#ffffff" stroke-width="2.0"/><rect x="2072.7" y="584.0" width="16.6" height="16.6" fill="none" stroke="#ffffff" stroke-width="2.0"/><rect x="2096.6" y="554.7" width="16.6" height="16.6" fill="none" stroke="#ffffff" stroke-width="2.0"/><rect x="1985.9" y="698.4" width="16.6" height="16.6" fill="rgba(255,255,255,0.3)" stroke="#111111" stroke-width="2.6"/><circle cx="2041.1" cy="724.8" r="5.8" fill="#c09494" stroke="#111" stroke-width="1.7"/><circle cx="2118.2" cy="724.8" r="5.8" fill="#b87474" stroke="#111" stroke-width="1.7"/><circle cx="2178.9" cy="726.4" r="5.8" fill="#b86262" stroke="#111" stroke-width="1.7"/><circle cx="2243.3" cy="728.6" r="5.8" fill="#b45050" stroke="#111" stroke-width="1.7"/><circle cx="2304.0" cy="728.6" r="5.8" fill="#a83a3a" stroke="#111" stroke-width="1.7"/><circle cx="1972.4" cy="669.0" r="5.8" fill="#a4bca4" stroke="#111" stroke-width="1.7"/><circle cx="1977.7" cy="616.3" r="5.8" fill="#88b888" stroke="#111" stroke-width="1.7"/><circle cx="1982.0" cy="566.8" r="5.8" fill="#6cb06c" stroke="#111" stroke-width="1.7"/><circle cx="1985.2" cy="518.9" r="5.8" fill="#50a850" stroke="#111" stroke-width="1.7"/><circle cx="1990.5" cy="468.8" r="5.8" fill="#30a030" stroke="#111" stroke-width="1.7"/><circle cx="1998.5" cy="688.1" r="5.8" fill="#c8c8a4" stroke="#111" stroke-width="1.7"/><circle cx="2026.2" cy="653.0" r="5.8" fill="#c4c48a" stroke="#111" stroke-width="1.7"/><circle cx="2053.3" cy="620.0" r="5.8" fill="#bcbc70" stroke="#111" stroke-width="1.7"/><circle cx="2077.3" cy="590.7" r="5.8" fill="#b8b850" stroke="#111" stroke-width="1.7"/><circle cx="2101.8" cy="560.9" r="5.8" fill="#b0b030" stroke="#111" stroke-width="1.7"/><circle cx="1948.5" cy="723.2" r="5.8" fill="#a4bcb0" stroke="#111" stroke-width="1.7"/><circle cx="1933.6" cy="723.2" r="5.8" fill="#90bab2" stroke="#111" stroke-width="1.7"/><circle cx="1919.2" cy="723.2" r="5.8" fill="#78b8b2" stroke="#111" stroke-width="1.7"/><circle cx="1908.0" cy="723.2" r="5.8" fill="#58b4b2" stroke="#111" stroke-width="1.7"/><circle cx="1896.9" cy="724.8" r="5.8" fill="#20b0b0" stroke="#111" stroke-width="1.7"/><circle cx="1929.9" cy="771.1" r="5.8" fill="#a4a4c4" stroke="#111" stroke-width="1.7"/><circle cx="1898.5" cy="807.9" r="5.8" fill="#8a8abc" stroke="#111" stroke-width="1.7"/><circle cx="1874.5" cy="837.1" r="5.8" fill="#7070b8" stroke="#111" stroke-width="1.7"/><circle cx="1855.9" cy="858.9" r="5.8" fill="#5050b0" stroke="#111" stroke-width="1.7"/><circle cx="1839.4" cy="879.2" r="5.8" fill="#1010a4" stroke="#111" stroke-width="1.7"/><circle cx="1965.0" cy="756.2" r="5.8" fill="#c4a8bc" stroke="#111" stroke-width="1.7"/><circle cx="1963.4" cy="783.9" r="5.8" fill="#c494c4" stroke="#111" stroke-width="1.7"/><circle cx="1961.3" cy="805.7" r="5.8" fill="#c478c4" stroke="#111" stroke-width="1.7"/><circle cx="1959.1" cy="824.4" r="5.8" fill="#c458c4" stroke="#111" stroke-width="1.7"/><circle cx="1959.1" cy="840.9" r="5.8" fill="#c018c0" stroke="#111" stroke-width="1.7"/><circle cx="1972.4" cy="719.0" r="5.8" fill="#ffffff" stroke="#111" stroke-width="1.7"/>
<circle cx="2405.2" cy="401.4" r="5.6" fill="#a8a800" stroke="#111" stroke-width="1.6"/>
<rect x="2411.5" y="406" width="17.5" height="17.5" fill="none" stroke="#fff" stroke-width="2.4"/>
</svg>
</body></html>
